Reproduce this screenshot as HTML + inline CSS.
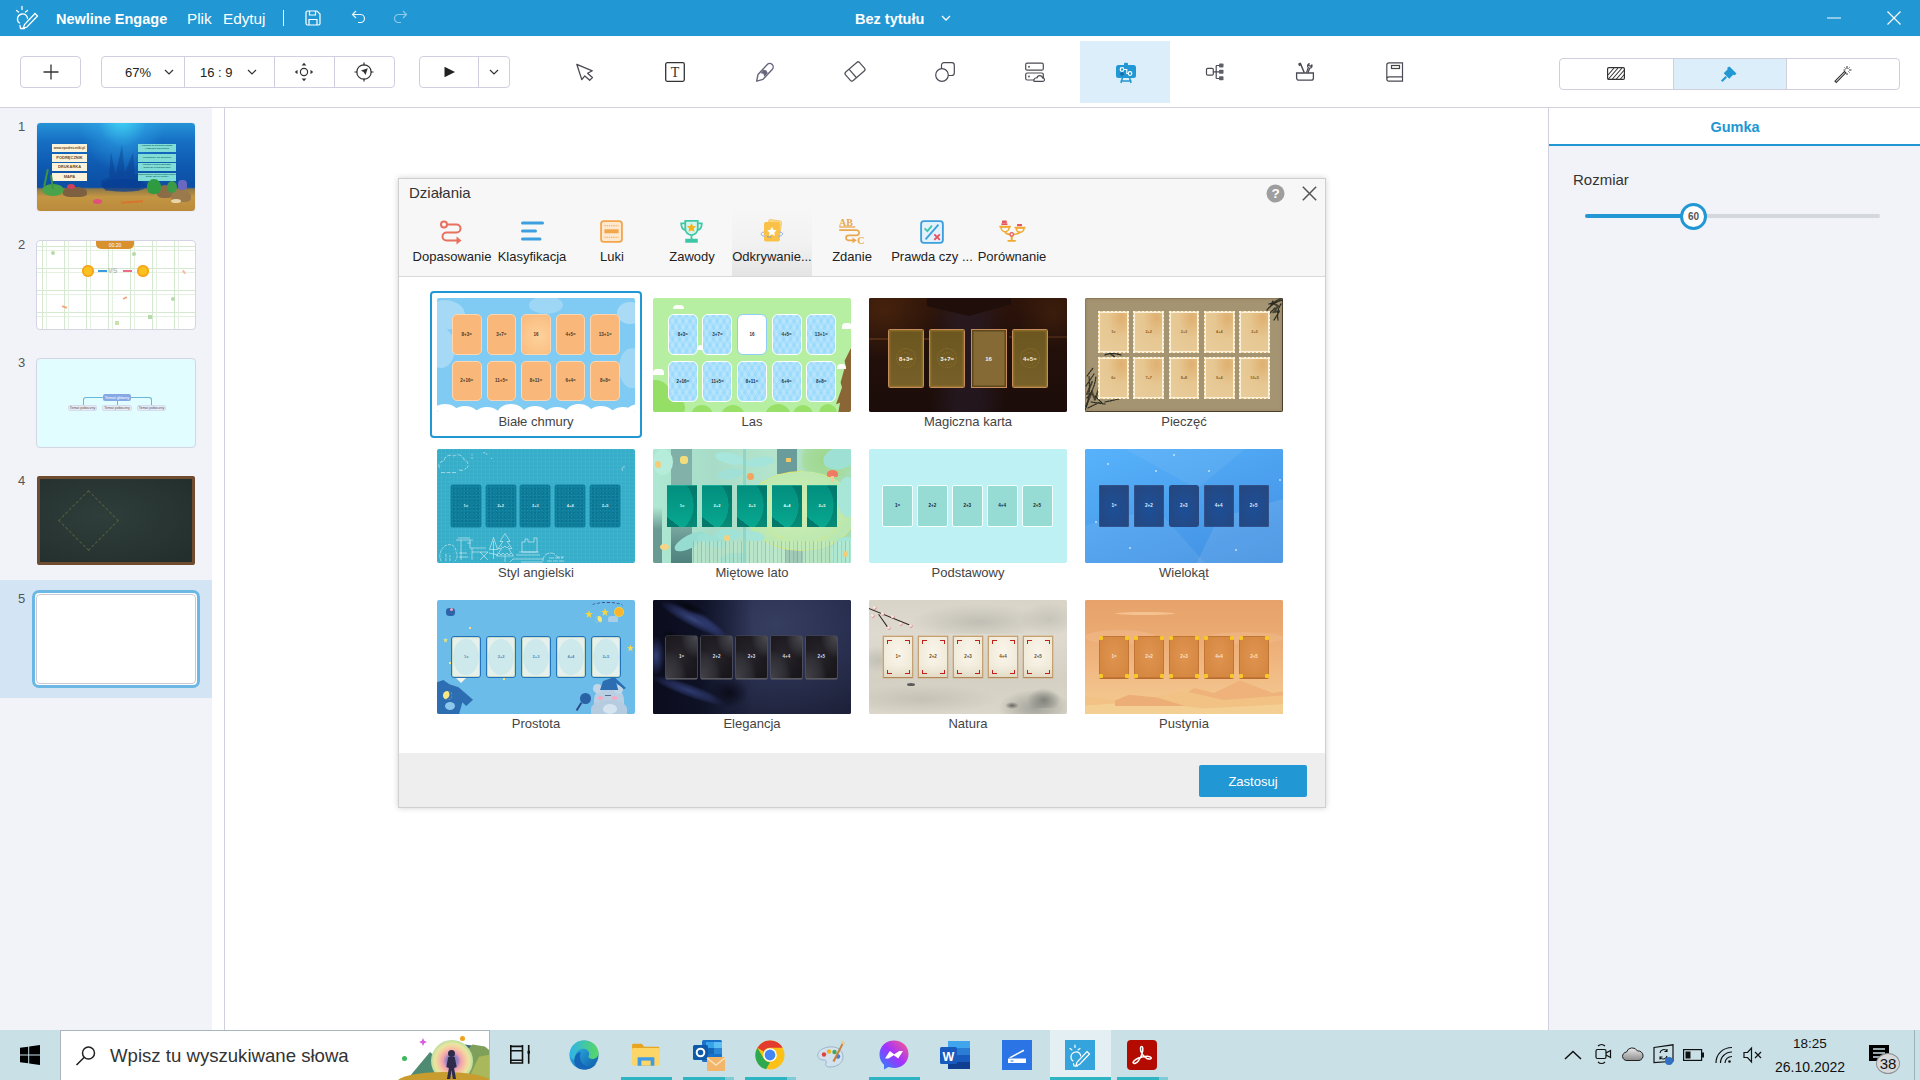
<!DOCTYPE html>
<html lang="pl">
<head>
<meta charset="utf-8">
<title>Newline Engage</title>
<style>
*{box-sizing:border-box;margin:0;padding:0}
html,body{width:1920px;height:1080px;overflow:hidden;background:#fff}
body{position:relative;font-family:"Liberation Sans",sans-serif;color:#333;-webkit-font-smoothing:antialiased}
.abs{position:absolute}
svg{position:absolute;overflow:visible}
/* title bar */
#tb{position:absolute;left:0;top:0;width:1920px;height:36px;background:#2197d4;color:#fff}
#tb span{position:absolute;white-space:nowrap;line-height:20px;top:9px;font-size:14.5px}
/* toolbar */
#tool{position:absolute;left:0;top:36px;width:1920px;height:72px;background:#fff;border-bottom:1px solid #d3d3e0}
.btn{position:absolute;border:1px solid #cfcfdf;border-radius:4px;background:#fff}
.vdiv{position:absolute;top:0;width:1px;height:100%;background:#cfcfdf}
.tx{position:absolute;white-space:nowrap;font-size:13px;line-height:16px;color:#222}
/* left */
#left{position:absolute;left:0;top:108px;width:212px;height:922px;background:#f2f3f9}
#vline{position:absolute;left:224px;top:108px;width:1px;height:922px;background:#d0d0df}
.num{position:absolute;left:18px;font-size:13px;color:#555;line-height:14px}
.bx{position:absolute;height:8px;font-size:3.200px;line-height:8px;text-align:center;white-space:nowrap;font-weight:bold;overflow:hidden}
.sl{position:absolute;left:36px;width:160px;height:90px;border-radius:4px;overflow:hidden;border:1px solid #d4d4e2}
/* right */
#right{position:absolute;left:1548px;top:108px;width:373px;height:922px;background:#f2f3f9;border-left:1px solid #d0d0df}
#rhead{position:absolute;left:0;top:0;width:372px;height:38px;background:#fff;border-bottom:2px solid #2197d4}
/* dialog */
#dlg{position:absolute;left:398px;top:178px;width:928px;height:630px;background:#fff;border:1px solid #cfcfcf;box-shadow:0 0 6px rgba(0,0,0,.18)}
#dhead{position:absolute;left:0;top:0;width:926px;height:98px;background:#f7f7f7;border-bottom:1px solid #d9d9d9}
#dfoot{position:absolute;left:0;top:574px;width:926px;height:54px;background:#eeeeee}
.tab{position:absolute;top:29px;width:80px;height:68px}
.tab svg{margin-top:1px}
.tab b{position:absolute;left:-10px;right:-10px;top:41px;text-align:center;font-weight:normal;font-size:13px;line-height:16px;color:#222;white-space:nowrap}
.th{position:absolute;width:198px;height:114px;overflow:hidden;border-radius:2px}
.lb{position:absolute;width:198px;text-align:center;font-size:13px;line-height:16px;color:#444;white-space:nowrap}
.c{position:absolute;border-radius:3px}
.c u{position:absolute;left:-4px;right:-4px;top:50%;margin-top:-2.500px;line-height:6px;text-align:center;text-decoration:none;white-space:nowrap;font-weight:bold}
/* taskbar */
#task{position:absolute;left:0;top:1030px;width:1920px;height:50px;background:#c9e0e6}
</style>
</head>
<body>
<!-- TITLEBAR -->
<div id="tb">
<span style="left:56px;font-weight:bold">Newline Engage</span>
<span style="left:187px;font-size:15.3px">Plik</span>
<span style="left:223px;font-size:15.3px">Edytuj</span>
<div class="abs" style="left:283px;top:10px;width:1px;height:16px;background:#fff"></div>
<span style="left:855px;font-weight:bold">Bez tytułu</span>

<svg style="left:15px;top:5px" width="26" height="26" viewBox="0 0 26 26" fill="none" stroke="#fff" stroke-width="1.300" stroke-linecap="round"><path d="M7 1.500v3M1.500 5.500l2 1.500M12.500 5.500l-2 1.500"/><path d="M4.500 18c-3-2-3-8 2.500-9 3.500-.3 5.500 2 5.500 4.500"/><path d="M5 20.500l.5 3h4"/><path d="M20 8.500l2.500 2.500L12 22l-3.800 1.200L9.500 19.500z"/></svg>
<svg style="left:305px;top:10px" width="16" height="16" viewBox="0 0 16 16" fill="none" stroke="#fff" stroke-width="1.200"><path d="M1 2.500A1.500 1.500 0 0 1 2.500 1H12l3 3v9.500a1.500 1.500 0 0 1-1.500 1.500h-11A1.500 1.500 0 0 1 1 13.500z"/><path d="M4.500 1v4h6V1M4 15V9.500h8V15"/></svg>
<svg style="left:351px;top:10px" width="15" height="14" viewBox="0 0 15 14" fill="none" stroke="#eaf4fb" stroke-width="1.200"><path d="M5 1L1.500 4.500 5 8M1.500 4.500h8a4 4 0 0 1 0 8H7"/></svg>
<svg style="left:393px;top:10px" width="15" height="14" viewBox="0 0 15 14" fill="none" stroke="#8fc8ea" stroke-width="1.200"><path d="M10 1l3.500 3.500L10 8M13.500 4.500h-8a4 4 0 0 0 0 8H8"/></svg>
<svg style="left:941px;top:15px" width="10" height="7" viewBox="0 0 10 7"><path d="M1 1l4 4 4-4" stroke="#fff" stroke-width="1.300" fill="none"/></svg>
<svg style="left:1827px;top:17px" width="14" height="2" viewBox="0 0 14 2"><path d="M0 1h14" stroke="#d5ebf7" stroke-width="1.200"/></svg>
<svg style="left:1887px;top:11px" width="14" height="14" viewBox="0 0 14 14"><path d="M.5 .5l13 13M13.500 .5l-13 13" stroke="#fff" stroke-width="1.200"/></svg>

</div>
<!-- TOOLBAR -->
<div id="tool">

<div class="btn" style="left:20px;top:20px;width:61px;height:32px"></div>
<svg style="left:43px;top:28px" width="16" height="16" viewBox="0 0 16 16"><path d="M8 .5v15M.5 8h15" stroke="#333" stroke-width="1.3" fill="none"/></svg>
<div class="btn" style="left:101px;top:20px;width:294px;height:32px">
 <div class="vdiv" style="left:82px"></div><div class="vdiv" style="left:172px"></div><div class="vdiv" style="left:232px"></div>
</div>
<span class="tx" style="left:125px;top:29px">67%</span>
<svg style="left:164px;top:33px" width="10" height="7" viewBox="0 0 10 7"><path d="M1 1l4 4 4-4" stroke="#333" stroke-width="1.2" fill="none"/></svg>
<span class="tx" style="left:200px;top:29px">16 : 9</span>
<svg style="left:247px;top:33px" width="10" height="7" viewBox="0 0 10 7"><path d="M1 1l4 4 4-4" stroke="#333" stroke-width="1.2" fill="none"/></svg>
<!-- move -->
<svg style="left:294px;top:26px" width="20" height="20" viewBox="0 0 20 20"><circle cx="10" cy="10" r="3.6" stroke="#333" stroke-width="1.2" fill="none"/><path d="M10 .8l2.3 2.7H7.7zM10 19.2l2.3-2.7H7.700zM.8 10l2.700-2.300v4.600zM19.200 10l-2.700-2.300v4.600z" fill="#333"/></svg>
<!-- compass -->
<svg style="left:354px;top:26px" width="20" height="20" viewBox="0 0 20 20"><circle cx="10" cy="10" r="7.2" stroke="#333" stroke-width="1.2" fill="none"/><path d="M10 .5v3M10 16.500v3M.5 10h3M16.500 10h3" stroke="#333" stroke-width="1.2"/><path d="M13.800 6.200l-2.300 6.800-1.700-2.800-2.800-1.700z" fill="#333"/></svg>
<div class="btn" style="left:419px;top:20px;width:91px;height:32px"><div class="vdiv" style="left:58px"></div></div>
<svg style="left:444px;top:30px" width="12" height="12" viewBox="0 0 12 12"><path d="M.5 .8L11 6 .5 11.200z" fill="#222"/></svg>
<svg style="left:489px;top:33px" width="10" height="7" viewBox="0 0 10 7"><path d="M1 1l4 4 4-4" stroke="#333" stroke-width="1.200" fill="none"/></svg>
<!-- cursor -->
<svg style="left:576px;top:27px" width="18" height="20" viewBox="0 0 18 20"><path d="M.8 1.300L16.300 7.800 11.600 10.300 16.400 14.600 13.700 17.300 8.800 12.900 5.800 16.600z" stroke="#4a4a55" stroke-width="1.300" fill="none" stroke-linejoin="round"/></svg>
<!-- text -->
<svg style="left:665px;top:26px" width="20" height="20" viewBox="0 0 20 20"><rect x=".7" y=".7" width="18.600" height="18.600" rx="1.500" stroke="#333" stroke-width="1.300" fill="none"/><text x="10" y="15" text-anchor="middle" font-family="Liberation Serif,serif" font-size="14" fill="#333">T</text></svg>
<!-- pen -->
<svg style="left:755px;top:26px" width="20" height="20" viewBox="0 0 20 20"><path d="M12.300 2.600a3.400 3.400 0 0 1 4.900 4.800L8 17.300 1.700 19.200 3 12.500z" stroke="#66667a" stroke-width="1.400" fill="none" stroke-linejoin="round"/><path d="M5.500 11.150L8.400 11.800 9.300 14.650 12.700 11.100 11.400 8.600 8.700 7.750z" fill="#66667a"/></svg>
<!-- eraser -->
<svg style="left:844px;top:25px" width="22" height="22" viewBox="0 0 22 22"><g transform="translate(11 10.500) rotate(-41)"><rect x="-9.300" y="-5.700" width="18.600" height="11.400" rx="2" stroke="#55555f" stroke-width="1.300" fill="none"/><path d="M-3 -5.700v11.400" stroke="#55555f" stroke-width="1.300"/></g></svg>
<!-- shapes -->
<svg style="left:935px;top:26px" width="20" height="20" viewBox="0 0 20 20"><rect x="6.500" y=".7" width="12.800" height="12.800" rx="2.500" stroke="#4a4a55" stroke-width="1.200" fill="none"/><circle cx="7" cy="13" r="6.300" stroke="#4a4a55" stroke-width="1.200" fill="#fff"/></svg>
<!-- resources -->
<svg style="left:1025px;top:26px" width="20" height="20" viewBox="0 0 20 20"><rect x=".7" y="1.200" width="17.600" height="7" rx="1.500" stroke="#4a4a55" stroke-width="1.200" fill="none"/><rect x=".7" y="11" width="17.600" height="7" rx="1.500" stroke="#4a4a55" stroke-width="1.200" fill="none"/><circle cx="4" cy="4.700" r="1" fill="#5f5f6c"/><circle cx="4" cy="14.500" r="1" fill="#5f5f6c"/><path d="M9 19.300h9c2 0 2-3.500-.5-3.500-.5-3-5-3-5.500 0-3-.5-3.500 3.500-3 3.500z" stroke="#4a4a55" stroke-width="1.200" fill="#fff"/></svg>
<!-- activities (active) -->
<div class="abs" style="left:1080px;top:5px;width:90px;height:62px;background:#dceef9"></div>
<svg style="left:1115px;top:26px" width="22" height="22" viewBox="0 0 22 22"><rect x="1" y="3" width="20" height="13" rx="2.500" fill="#2197d4"/><rect x="9" y=".8" width="4" height="3" rx="1" fill="#2197d4"/><path d="M6 21l1.500-5.500M16 21l-1.500-5.500M5.500 19h11" stroke="#2197d4" stroke-width="1.500" fill="none"/><circle cx="7" cy="7.500" r="1.800" stroke="#fff" stroke-width="1.200" fill="none"/><circle cx="15" cy="11.500" r="1.800" stroke="#fff" stroke-width="1.200" fill="none"/><path d="M8.800 7.500h3v4h1.500" stroke="#fff" stroke-width="1.100" fill="none"/><circle cx="7" cy="12" r="1.800" fill="#1769a3"/></svg>
<!-- tree -->
<svg style="left:1205px;top:27px" width="20" height="18" viewBox="0 0 20 18"><rect x="1.500" y="5.300" width="6.800" height="6.800" rx="1.200" stroke="#4a4a55" stroke-width="1.200" fill="none"/><path d="M8.300 8.800h3M11.200 2.500v13M11.200 2.500h3M11.200 8.800h3M11.200 15.500h3" stroke="#4a4a55" stroke-width="1.200" fill="none"/><rect x="14" y=".5" width="4.500" height="4" rx=".8" fill="#5f5f6c"/><rect x="14" y="6.800" width="4.500" height="4" rx=".8" fill="#5f5f6c"/><rect x="14" y="13.300" width="4.500" height="4" rx=".8" fill="#5f5f6c"/></svg>
<!-- toolbox -->
<svg style="left:1295px;top:26px" width="20" height="20" viewBox="0 0 20 20"><path d="M1.600 11h16.800v5a2.200 2.200 0 0 1-2.200 2.200H3.800A2.200 2.200 0 0 1 1.600 16z" stroke="#4a4a55" stroke-width="1.300" fill="none"/><path d="M3.500 2.200l1.800-.9 4 9.500" stroke="#4a4a55" stroke-width="1.500" fill="none" stroke-linejoin="round"/><path d="M3.200 2.500l2.200-1.300 1 1.800-2.200 1.300z" fill="#4a4a55"/><path d="M11.500 10.800l1.800-5.300c-1.300-1.300-.8-3.300.8-4l-.3 2 1.700.8 1.300-1.500c.8 1.500-.3 3.400-2.200 3.400l-1.500 4.600" stroke="#4a4a55" stroke-width="1.200" fill="none" stroke-linejoin="round"/></svg>
<!-- book -->
<svg style="left:1386px;top:26px" width="18" height="20" viewBox="0 0 18 20"><path d="M3 .8h13.500v18.400H3a2.200 2.200 0 0 1 0-4.400h13.500M.8 17V3A2.200 2.200 0 0 1 3 .8" stroke="#4a4a55" stroke-width="1.200" fill="none"/><rect x="5.500" y="3.500" width="8" height="3" stroke="#444" stroke-width="1.200" fill="none"/></svg>
<!-- right group -->
<div class="btn" style="left:1559px;top:22px;width:341px;height:32px;overflow:hidden"><div class="abs" style="left:113px;top:0;width:114px;height:100%;background:#dceef9"></div><div class="vdiv" style="left:113px"></div><div class="vdiv" style="left:226px"></div></div>
<svg style="left:1607px;top:31px" width="18" height="13" viewBox="0 0 18 13"><rect x=".6" y=".6" width="16.800" height="11.800" rx="1.200" stroke="#333" stroke-width="1.200" fill="none"/><path d="M1 8L7 1M1 12.500L11 1M5 12.500L15 1M9 12.500L17.300 3M13 12.500l4.300-5" stroke="#333" stroke-width="1.100"/></svg>
<svg style="left:1720px;top:29px" width="18" height="18" viewBox="0 0 18 18"><path d="M9.500 1.500l7 7-1.800 1.800-1.500-.5-4 4-5.500-5.500 4-4-.5-1.500z" fill="#2197d4"/><path d="M5.500 11L1 15.500 2.500 17 7 12.500z" fill="#2197d4"/></svg>
<svg style="left:1834px;top:29px" width="18" height="18" viewBox="0 0 18 18"><path d="M1 16.200L10.500 6.500l1.300 1.300L2.300 17.500z" stroke="#333" stroke-width="1.100" fill="none"/><path d="M13 1v3M13 8v2M9.500 5h2M15 5h2.500M10.500 2.500l1 1M15.500 2.500l-1 1M15.500 7.500l-1-1" stroke="#333" stroke-width="1"/></svg>

</div>
<!-- LEFT -->
<div id="left">

<span class="num" style="top:12px">1</span>
<div class="sl" style="top:14px;border:1.500px solid #ececf5;background:linear-gradient(180deg,#2693d8 0,#1670c4 20%,#0e58b0 50%,#0c4ea4 73%,#8f7a48 75%,#c39643 84%,#b98a3b 100%)">
 <div class="abs" style="left:40px;top:-14px;width:90px;height:64px;background:radial-gradient(ellipse at 50% 8%,rgba(70,225,250,.9),rgba(50,170,235,.4) 40%,rgba(40,140,220,0) 70%)"></div>
 <div class="abs" style="left:62px;top:20px;width:46px;height:48px;background:rgba(8,52,130,.38);clip-path:polygon(14% 100%,4% 78%,22% 72%,26% 18%,36% 66%,50% 4%,56% 62%,74% 20%,78% 66%,98% 62%,88% 100%)"></div>
 <div class="abs" style="left:64px;top:56px;width:46px;height:13px;border-radius:50%;background:rgba(8,60,150,.55)"></div>
 <div class="bx" style="left:15px;top:21px;width:35px;background:#fbf3d9;color:#6a4a2a">www.epodreczniki.pl</div><div class="bx" style="left:15px;top:30.500px;width:35px;background:#fbf3d9;color:#6a4a2a;font-size:4px">PODRĘCZNIK</div><div class="bx" style="left:15px;top:40px;width:35px;background:#fbf3d9;color:#6a4a2a;font-size:4px">DRUKARKA</div><div class="bx" style="left:15px;top:49.500px;width:35px;background:#fbf3d9;color:#6a4a2a;font-size:4px">MAPA</div>
 <div class="bx" style="left:101px;top:21px;width:38px;background:#7fdcd6;color:#1f6a66;font-size:2.500px;line-height:2.600px;padding-top:1.400px">Książka ze zbiorem zadań<br>i ćwiczeń dla ucznia</div><div class="bx" style="left:101px;top:30.500px;width:38px;background:#7fdcd6;color:#1f6a66;font-size:2.500px">Urządzenie do wydruku</div><div class="bx" style="left:101px;top:40px;width:38px;background:#7fdcd6;color:#1f6a66;font-size:2.500px;line-height:2.600px;padding-top:1.400px">Strona z podręcznikami<br>w wersji elektronicznej</div><div class="bx" style="left:101px;top:49.500px;width:38px;background:#7fdcd6;color:#1f6a66;font-size:2.500px;line-height:2.600px;padding-top:1.400px">Zmniejszony obraz powierzchni<br>Ziemi lub jej części</div>
 <div class="abs" style="left:5px;top:61px;width:22px;height:12px;border-radius:50%;background:#4aa24a"></div>
 <div class="abs" style="left:8px;top:46px;width:2px;height:18px;background:#3c9440;transform:rotate(12deg)"></div><div class="abs" style="left:14px;top:52px;width:2px;height:14px;background:#3c9440;transform:rotate(-8deg)"></div>
 <div class="abs" style="left:26px;top:64px;width:24px;height:10px;border-radius:50% 50% 30% 30%;background:#7d6040"></div>
 <div class="abs" style="left:30px;top:61px;width:8px;height:5px;border-radius:50%;background:#d0405a"></div>
 <div class="abs" style="left:120px;top:62px;width:16px;height:13px;border-radius:50% 50% 30% 30%;background:#8a6c46"></div>
 <div class="abs" style="left:134px;top:67px;width:20px;height:12px;border-radius:50% 50% 30% 30%;background:#9a7a4c"></div>
 <div class="abs" style="left:110px;top:56px;width:14px;height:15px;border-radius:50% 50% 40% 40%;background:#2f9a40"></div>
 <div class="abs" style="left:130px;top:58px;width:10px;height:12px;border-radius:50%;background:#3a9a48"></div>
 <div class="abs" style="left:141px;top:57px;width:9px;height:10px;border-radius:40%;background:#6a68c0"></div>
 <div class="abs" style="left:56px;top:76px;width:9px;height:5px;border-radius:50%;background:#e0507a"></div>
 <div class="abs" style="left:84px;top:78px;width:22px;height:2px;background:#d8742c;transform:rotate(-4deg)"></div>
 <div class="abs" style="left:134px;top:76px;width:10px;height:4px;border-radius:50%;background:#e8d6a8"></div>
</div>
<span class="num" style="top:130px">2</span>
<div class="sl" style="top:132px;background:#fff;background-image:linear-gradient(90deg,transparent 0,transparent 5px,#d3e8cf 5px,#d3e8cf 6px,transparent 6px,transparent 9px,#e4f0e0 9px,#e4f0e0 10px,transparent 10px),linear-gradient(180deg,transparent 0,transparent 5px,#d3e8cf 5px,#d3e8cf 6px,transparent 6px,transparent 9px,#e4f0e0 9px,#e4f0e0 10px,transparent 10px);background-size:22px 22px,22px 22px">
 <div class="abs" style="left:59px;top:0;width:38px;height:8px;border-radius:0 0 5px 5px;background:#d9912e;color:#fff;font-size:5px;line-height:8px;text-align:center">00:20</div>
 <div class="abs" style="left:45px;top:24px;width:12px;height:12px;border-radius:50%;background:#fbc21e;box-shadow:inset 0 0 0 2px #f5a623"></div>
 <div class="abs" style="left:100px;top:24px;width:12px;height:12px;border-radius:50%;background:#fbc21e;box-shadow:inset 0 0 0 2px #f5a623"></div>
 <div class="abs" style="left:61px;top:29px;width:9px;height:2px;background:#3a9ce0"></div><div class="abs" style="left:71px;top:26px;width:14px;height:7px;color:#bbb;font-size:7px;line-height:7px;font-weight:bold">VS</div><div class="abs" style="left:86px;top:29px;width:9px;height:2px;background:#f06a8a"></div>
 <div class="abs" style="left:14px;top:10px;width:4px;height:4px;border-radius:50%;background:#b7dba8"></div><div class="abs" style="left:95px;top:11px;width:4px;height:4px;border-radius:50%;background:#b7dba8"></div><div class="abs" style="left:134px;top:56px;width:4px;height:4px;border-radius:50%;background:#b7dba8"></div><div class="abs" style="left:111px;top:74px;width:4px;height:4px;background:#b7dba8"></div><div class="abs" style="left:78px;top:80px;width:4px;height:4px;background:#c9e4a8"></div>
 <div class="abs" style="left:86px;top:56px;width:4px;height:2px;background:#f5a27a;transform:rotate(-30deg)"></div><div class="abs" style="left:25px;top:65px;width:5px;height:2px;background:#f5a27a;transform:rotate(20deg)"></div><div class="abs" style="left:145px;top:30px;width:4px;height:2px;background:#f7b8a0;transform:rotate(50deg)"></div>
</div>
<span class="num" style="top:248px">3</span>
<div class="sl" style="top:250px;background:#e1fdff">
 <div class="abs" style="left:46px;top:38px;width:69px;height:8px;border:1px solid #6ab6d6;border-bottom:0;border-radius:3px 3px 0 0"></div>
 <div class="abs" style="left:66px;top:35px;width:28px;height:7px;border-radius:2px;background:#86a9e6;color:#fff;font-size:4px;line-height:7px;text-align:center">Temat główny</div>
 <div class="abs" style="left:80px;top:42px;width:1px;height:5px;background:#6ab6d6"></div>
 <div class="abs" style="left:31px;top:46px;width:29px;height:6px;border-radius:2px;background:#e7ebf7;border:1px solid #d5dcee;color:#555;font-size:3.500px;line-height:4px;text-align:center">Temat poboczny</div>
 <div class="abs" style="left:65px;top:46px;width:30px;height:6px;border-radius:2px;background:#e7ebf7;border:1px solid #d5dcee;color:#555;font-size:3.500px;line-height:4px;text-align:center">Temat poboczny</div>
 <div class="abs" style="left:100px;top:46px;width:29px;height:6px;border-radius:2px;background:#e7ebf7;border:1px solid #d5dcee;color:#555;font-size:3.500px;line-height:4px;text-align:center">Temat poboczny</div>
</div>
<span class="num" style="top:366px">4</span>
<div class="sl" style="left:37px;width:158px;height:89px;top:368px;border:0;border-radius:2px;background:#6f4c2f">
 <div class="abs" style="left:3px;top:3px;width:152px;height:83px;background:radial-gradient(ellipse at 40% 45%,#2f3e3b,#232f2d 90%)"></div>
 <div class="abs" style="left:30px;top:23px;width:43px;height:43px;border:1px dashed #565c40;transform:rotate(45deg)"></div>
</div>
<div class="abs" style="left:0;top:472px;width:212px;height:118px;background:#d3e5f4"></div>
<span class="num" style="top:484px">5</span>
<div class="abs" style="left:32px;top:482px;width:168px;height:98px;border:3px solid #6ab8e3;border-radius:7px;background:#fff"></div>
<div class="sl" style="left:36px;top:486px;width:160px;height:90px;background:#fff;border-color:#c9c9d4"></div>

</div>
<div id="vline"></div>
<!-- RIGHT -->
<div id="right">
<div id="rhead"></div>

<div class="abs" style="left:0;top:9px;width:372px;text-align:center;font-weight:bold;font-size:14.500px;line-height:20px;color:#2197d4">Gumka</div>
<div class="abs" style="left:24px;top:62px;font-size:15px;line-height:20px;color:#333">Rozmiar</div>
<div class="abs" style="left:36px;top:106px;width:295px;height:4px;border-radius:2px;background:#d4d8dd"></div>
<div class="abs" style="left:36px;top:106px;width:108px;height:4px;border-radius:2px;background:#2197d4"></div>
<div class="abs" style="left:131px;top:95px;width:27px;height:27px;border-radius:50%;border:3px solid #2197d4;background:#fff;font-size:10px;font-weight:bold;line-height:21px;text-align:center;color:#555">60</div>

</div>
<!-- DIALOG -->
<div id="dlg">
<div id="dhead">
<div class="abs" style="left:10px;top:4px;font-size:15px;line-height:20px;color:#333">Działania</div>
<svg style="left:867px;top:5px" width="19" height="19" viewBox="0 0 19 19"><circle cx="9.500" cy="9.500" r="9" fill="#9e9e9e"/><text x="9.500" y="14.300" text-anchor="middle" font-family="Liberation Sans,sans-serif" font-weight="bold" font-size="13.500" fill="#fff">?</text></svg>
<svg style="left:903px;top:7px" width="15" height="15" viewBox="0 0 15 15"><path d="M.8 .8l13.400 13.400M14.200 .8L.8 14.200" stroke="#555" stroke-width="1.500"/></svg>
<div class="tab" style="left:13px"><svg style="left:27px;top:11px" width="26" height="24" viewBox="0 0 26 24" fill="none" stroke="#e8705f" stroke-width="2"><circle cx="5" cy="4.500" r="3"/><path d="M8 4.500h9.500a4 4 0 0 1 0 8H7.500a4 4 0 0 0 0 8h11"/><path d="M17.500 16.500l5 4-5 4z" fill="#e8705f" stroke="none"/></svg><b>Dopasowanie</b></div>
<div class="tab" style="left:93px"><svg style="left:29px;top:12px" width="24" height="22" viewBox="0 0 24 22" stroke="#3d9fe0" stroke-width="3" stroke-linecap="round"><path d="M1.500 2h20M1.500 10h13M1.500 18h17.500"/></svg><b>Klasyfikacja</b></div>
<div class="tab" style="left:173px"><svg style="left:28px;top:11px" width="23" height="23" viewBox="0 0 26 26"><rect x="1.200" y="1.200" width="23.600" height="23.600" rx="3" fill="#fde9cf" stroke="#f3a54a" stroke-width="2"/><path d="M5 6.500h16M5 19.500h16" stroke="#f3a54a" stroke-width="1.200" stroke-dasharray="1.500 1"/><rect x="5" y="10.500" width="16" height="4.500" fill="#f3a54a"/></svg><b>Luki</b></div>
<div class="tab" style="left:253px"><svg style="left:27px;top:10px" width="25" height="25" viewBox="0 0 28 28"><path d="M7 2h14v9a7 7 0 0 1-14 0z" fill="#d4f5ec" stroke="#3dc7a6" stroke-width="2"/><path d="M7 5H2.500c0 5 2 7 5 7.500M21 5h4.500c0 5-2 7-5 7.500" fill="none" stroke="#3dc7a6" stroke-width="2"/><path d="M14 18v5M8 25.500h12v-2.500H8z" stroke="#3dc7a6" stroke-width="2" fill="#3dc7a6"/><path d="M14 4.500l1.600 3.200 3.500.5-2.500 2.500.6 3.500-3.200-1.700-3.200 1.700.6-3.500-2.500-2.500 3.500-.5z" fill="#f6b21b"/></svg><b>Zawody</b></div>
<div class="tab" style="left:333px;background:linear-gradient(180deg,#f7f7f7 0,#f1f1f1 55%,#e4e4e4 100%)"><svg style="left:27px;top:10px" width="26" height="24" viewBox="0 0 26 24"><rect x="8.500" y="1.200" width="13" height="17" rx="1.500" fill="#fbd88a" stroke="#f6c35a" stroke-width=".8" transform="rotate(9 15 10)"/><rect x="5" y="3" width="15.800" height="19.500" rx="1.800" fill="#f9c147"/><path d="M12.900 7.800l1.500 3 3.300.5-2.400 2.300.6 3.300-3-1.600-3 1.600.6-3.300-2.400-2.300 3.300-.5z" fill="#fff"/><path d="M5 13c-4 .8-4.200 3.500 1 4.300M20.800 13c4.300.8 4 3.600-1.500 4.400" fill="none" stroke="#8ab0ee" stroke-width="1"/><path d="M8 17.600c2 .5 3.500.5 4.500.3" fill="none" stroke="#6a98e8" stroke-width="1"/></svg><b>Odkrywanie...</b></div>
<div class="tab" style="left:413px"><svg style="left:26px;top:9px" width="28" height="28" viewBox="0 0 28 28"><text x="1" y="7.800" font-family="Liberation Serif,serif" font-weight="bold" font-size="10" fill="#e9a84e">AB</text><path d="M1.200 9h16" stroke="#e9a84e" stroke-width="1.300" fill="none"/><path d="M1.200 12.200h17.300a2.600 2.600 0 0 1 0 5.200h-8a2.450 2.450 0 0 0 0 4.900h4.500" fill="none" stroke="#e9a84e" stroke-width="1.700"/><path d="M14.500 19.400l4.300 2.900-4.300 2.900z" fill="#e9a84e"/><text x="19.300" y="26" font-family="Liberation Serif,serif" font-weight="bold" font-size="10" fill="#e9a84e">C</text></svg><b>Zdanie</b></div>
<div class="tab" style="left:493px"><svg style="left:28px;top:11px" width="24" height="24" viewBox="0 0 26 26"><rect x="1.200" y="1.200" width="23.600" height="23.600" rx="3" fill="#e3f1fc" stroke="#3d9fe0" stroke-width="2"/><path d="M20 5L6 21" stroke="#3d9fe0" stroke-width="2"/><path d="M5 9l3 3 5-6" fill="none" stroke="#3dc7a6" stroke-width="2"/><path d="M15.500 15.500l6 6M21.500 15.500l-6 6" stroke="#e8505f" stroke-width="2"/></svg><b>Prawda czy ...</b></div>
<div class="tab" style="left:573px"><svg style="left:26px;top:10px" width="28" height="24" viewBox="0 0 28 24"><rect x="4" y="1.600" width="4.800" height="2.300" rx=".5" fill="#e8555f"/><rect x="3.300" y="4.300" width="6.200" height="1.800" rx=".5" fill="#e8555f"/><rect x="19" y="5" width="5" height="2.300" rx=".5" fill="#e8555f"/><path d="M2 7.600h10.200M17.200 8.500h9.600" stroke="#f1a92f" stroke-width="1.700" stroke-linecap="round"/><path d="M3 8a4.100 4.700 0 0 0 8.200 0zM18.200 9a3.900 4.300 0 0 0 7.800 0z" fill="none" stroke="#f1a92f" stroke-width="1.600"/><path d="M7.100 12.800c.5 2 3.500 2.700 6.600 2.700s5.800-.5 8.400-2.300" fill="none" stroke="#f1a92f" stroke-width="1.700"/><path d="M13.700 17v4" stroke="#f1a92f" stroke-width="2"/><path d="M10.300 21.800h6.800" stroke="#f1a92f" stroke-width="1.800" stroke-linecap="round"/><circle cx="13.700" cy="15.400" r="1.700" fill="#fff" stroke="#e8555f" stroke-width="1.300"/></svg><b>Porównanie</b></div>

</div>
<!--THUMBS-START-->
<div class="abs" style="left:31px;top:112px;width:212px;height:147px;border:2px solid #2197d4;border-radius:4px"></div>
<div class="th" style="left:38px;top:119px;background:#7fcbf4"><div class="abs" style="left:-12px;top:2px;width:40px;height:30px;border-radius:50%;background:#a5d9f6"></div><div class="abs" style="left:-10px;top:30px;width:28px;height:40px;border-radius:50%;background:#a5d9f6"></div><div class="abs" style="left:92px;top:-2px;width:34px;height:18px;border-radius:50%;background:#9ed6f5"></div><div class="abs" style="left:180px;top:4px;width:26px;height:22px;border-radius:50%;background:#a9dbf6"></div><div class="abs" style="left:182px;top:50px;width:26px;height:40px;border-radius:50%;background:#9ed6f5"></div><div class="abs" style="left:-6px;top:106px;width:28px;height:20px;border-radius:50%;background:#fff"></div><div class="abs" style="left:14px;top:107.5px;width:28px;height:20px;border-radius:50%;background:#fff"></div><div class="abs" style="left:36px;top:109px;width:28px;height:20px;border-radius:50%;background:#fff"></div><div class="abs" style="left:60px;top:106px;width:28px;height:20px;border-radius:50%;background:#fff"></div><div class="abs" style="left:84px;top:107.5px;width:28px;height:20px;border-radius:50%;background:#fff"></div><div class="abs" style="left:106px;top:109px;width:28px;height:20px;border-radius:50%;background:#fff"></div><div class="abs" style="left:128px;top:106px;width:28px;height:20px;border-radius:50%;background:#fff"></div><div class="abs" style="left:150px;top:107.5px;width:28px;height:20px;border-radius:50%;background:#fff"></div><div class="abs" style="left:172px;top:109px;width:28px;height:20px;border-radius:50%;background:#fff"></div><div class="abs" style="left:188px;top:106px;width:28px;height:20px;border-radius:50%;background:#fff"></div><div class="c" style="left:15px;top:16px;width:29.5px;height:41px;background:#f9b87a;border:1px solid #fcd6b0;border-radius:5px"><u style="color:#4a3424;font-size:4.5px">8+3=</u></div><div class="c" style="left:49.6px;top:16px;width:29.5px;height:41px;background:#f9b87a;border:1px solid #fcd6b0;border-radius:5px"><u style="color:#4a3424;font-size:4.5px">3+7=</u></div><div class="c" style="left:84.2px;top:16px;width:29.5px;height:41px;background:radial-gradient(circle at 60% 55%,#fdd29c,#f9b87a);border:1px solid #fcd6b0;border-radius:5px"><u style="color:#4a3424;font-size:4.5px">16</u></div><div class="c" style="left:118.8px;top:16px;width:29.5px;height:41px;background:#f9b87a;border:1px solid #fcd6b0;border-radius:5px"><u style="color:#4a3424;font-size:4.5px">4+5=</u></div><div class="c" style="left:153.4px;top:16px;width:29.5px;height:41px;background:#f9b87a;border:1px solid #fcd6b0;border-radius:5px"><u style="color:#4a3424;font-size:4.5px">13+1=</u></div><div class="c" style="left:15px;top:62.5px;width:29.5px;height:40.6px;background:#f9b87a;border:1px solid #fcd6b0;border-radius:5px"><u style="color:#4a3424;font-size:4.5px">2+16=</u></div><div class="c" style="left:49.6px;top:62.5px;width:29.5px;height:40.6px;background:#f9b87a;border:1px solid #fcd6b0;border-radius:5px"><u style="color:#4a3424;font-size:4.5px">11+5=</u></div><div class="c" style="left:84.2px;top:62.5px;width:29.5px;height:40.6px;background:#f9b87a;border:1px solid #fcd6b0;border-radius:5px"><u style="color:#4a3424;font-size:4.5px">8+11=</u></div><div class="c" style="left:118.8px;top:62.5px;width:29.5px;height:40.6px;background:#f9b87a;border:1px solid #fcd6b0;border-radius:5px"><u style="color:#4a3424;font-size:4.5px">6+4=</u></div><div class="c" style="left:153.4px;top:62.5px;width:29.5px;height:40.6px;background:#f9b87a;border:1px solid #fcd6b0;border-radius:5px"><u style="color:#4a3424;font-size:4.5px">8+8=</u></div></div>
<div class="lb" style="left:38px;top:235px">Białe chmury</div>
<div class="th" style="left:254px;top:119px;background:#b6efa2"><div class="abs" style="left:-14px;top:82px;width:34px;height:44px;border-radius:50%;background:#96df66"></div><div class="abs" style="left:8px;top:98px;width:24px;height:24px;border-radius:50%;background:#96df66"></div><div class="abs" style="left:38px;top:107px;width:22px;height:22px;border-radius:50%;background:#98e068"></div><div class="abs" style="left:68px;top:107px;width:24px;height:24px;border-radius:50%;background:#98e068"></div><div class="abs" style="left:112px;top:106px;width:26px;height:26px;border-radius:50%;background:#98e068"></div><div class="abs" style="left:140px;top:107px;width:20px;height:20px;border-radius:50%;background:#98e068"></div><div class="abs" style="left:166px;top:106px;width:18px;height:18px;border-radius:50%;background:#98e068"></div><div class="abs" style="left:180px;top:46px;width:20px;height:70px;background:#8a6535;clip-path:polygon(100% 0,100% 100%,25% 100%,35% 84%,15% 86%,45% 62%,38% 55%,62% 30%,58% 24%)"></div><div class="abs" style="left:20px;top:7px;width:11px;height:4px;border-radius:4px 4px 0 0;background:#fff"></div><div class="abs" style="left:0;top:71px;width:11px;height:6px;border-radius:4px 4px 0 0;background:#fff"></div><div class="abs" style="left:189px;top:25px;width:10px;height:6px;border-radius:4px 4px 0 0;background:#fff"></div><div class="abs" style="left:184px;top:66px;width:9px;height:5px;border-radius:4px 4px 0 0;background:#fff"></div><div class="abs" style="left:45px;top:47px;width:5px;height:5px;border-radius:3px 3px 0 0;background:#fff"></div><div class="c" style="left:14.7px;top:15.5px;width:30.2px;height:41.5px;background-color:#9adafc;border:1.500px solid #fff;border-radius:6px;background-image:repeating-linear-gradient(60deg,rgba(255,255,255,.16) 0 3px,transparent 3px 6px),repeating-linear-gradient(-60deg,rgba(255,255,255,.16) 0 3px,transparent 3px 6px)"><u style="color:#234;font-size:4.5px">8+3=</u></div><div class="c" style="left:49.3px;top:15.5px;width:30.2px;height:41.5px;background-color:#9adafc;border:1.500px solid #fff;border-radius:6px;background-image:repeating-linear-gradient(60deg,rgba(255,255,255,.16) 0 3px,transparent 3px 6px),repeating-linear-gradient(-60deg,rgba(255,255,255,.16) 0 3px,transparent 3px 6px)"><u style="color:#234;font-size:4.5px">3+7=</u></div><div class="c" style="left:83.9px;top:15.5px;width:30.2px;height:41.5px;background:#fff;border:1.500px solid #8fcdf6;border-radius:6px"><u style="color:#234;font-size:4.5px">16</u></div><div class="c" style="left:118.5px;top:15.5px;width:30.2px;height:41.5px;background-color:#9adafc;border:1.500px solid #fff;border-radius:6px;background-image:repeating-linear-gradient(60deg,rgba(255,255,255,.16) 0 3px,transparent 3px 6px),repeating-linear-gradient(-60deg,rgba(255,255,255,.16) 0 3px,transparent 3px 6px)"><u style="color:#234;font-size:4.5px">4+5=</u></div><div class="c" style="left:153.1px;top:15.5px;width:30.2px;height:41.5px;background-color:#9adafc;border:1.500px solid #fff;border-radius:6px;background-image:repeating-linear-gradient(60deg,rgba(255,255,255,.16) 0 3px,transparent 3px 6px),repeating-linear-gradient(-60deg,rgba(255,255,255,.16) 0 3px,transparent 3px 6px)"><u style="color:#234;font-size:4.5px">13+1=</u></div><div class="c" style="left:14.7px;top:62.5px;width:30.2px;height:41px;background-color:#9adafc;border:1.500px solid #fff;border-radius:6px;background-image:repeating-linear-gradient(60deg,rgba(255,255,255,.16) 0 3px,transparent 3px 6px),repeating-linear-gradient(-60deg,rgba(255,255,255,.16) 0 3px,transparent 3px 6px)"><u style="color:#234;font-size:4.5px">2+16=</u></div><div class="c" style="left:49.3px;top:62.5px;width:30.2px;height:41px;background-color:#9adafc;border:1.500px solid #fff;border-radius:6px;background-image:repeating-linear-gradient(60deg,rgba(255,255,255,.16) 0 3px,transparent 3px 6px),repeating-linear-gradient(-60deg,rgba(255,255,255,.16) 0 3px,transparent 3px 6px)"><u style="color:#234;font-size:4.5px">11+5=</u></div><div class="c" style="left:83.9px;top:62.5px;width:30.2px;height:41px;background-color:#9adafc;border:1.500px solid #fff;border-radius:6px;background-image:repeating-linear-gradient(60deg,rgba(255,255,255,.16) 0 3px,transparent 3px 6px),repeating-linear-gradient(-60deg,rgba(255,255,255,.16) 0 3px,transparent 3px 6px)"><u style="color:#234;font-size:4.5px">8+11=</u></div><div class="c" style="left:118.5px;top:62.5px;width:30.2px;height:41px;background-color:#9adafc;border:1.500px solid #fff;border-radius:6px;background-image:repeating-linear-gradient(60deg,rgba(255,255,255,.16) 0 3px,transparent 3px 6px),repeating-linear-gradient(-60deg,rgba(255,255,255,.16) 0 3px,transparent 3px 6px)"><u style="color:#234;font-size:4.5px">6+4=</u></div><div class="c" style="left:153.1px;top:62.5px;width:30.2px;height:41px;background-color:#9adafc;border:1.500px solid #fff;border-radius:6px;background-image:repeating-linear-gradient(60deg,rgba(255,255,255,.16) 0 3px,transparent 3px 6px),repeating-linear-gradient(-60deg,rgba(255,255,255,.16) 0 3px,transparent 3px 6px)"><u style="color:#234;font-size:4.5px">8+8=</u></div></div>
<div class="lb" style="left:254px;top:235px">Las</div>
<div class="th" style="left:470px;top:119px;background:#23100a"><div class="abs" style="left:0;top:0;width:198px;height:114px;background:linear-gradient(180deg,#2e1409 0,#23100a 35%,#1c0d0a 100%)"></div><div class="abs" style="left:0;top:0;width:70px;height:60px;background:radial-gradient(ellipse at 20% 20%,rgba(80,40,14,.7),rgba(60,28,10,0) 75%)"></div><div class="abs" style="left:150px;top:0;width:48px;height:50px;background:radial-gradient(ellipse at 70% 30%,rgba(70,36,14,.6),rgba(60,28,10,0) 75%)"></div><div class="abs" style="left:62px;top:0;width:74px;height:114px;background:linear-gradient(90deg,rgba(40,28,48,0),rgba(42,32,50,.5) 35%,rgba(40,30,48,.5) 65%,rgba(40,28,48,0))"></div><div class="abs" style="left:0;top:40px;width:62px;height:1.500px;background:rgba(110,62,30,.55)"></div><div class="abs" style="left:140px;top:38px;width:58px;height:1.500px;background:rgba(100,56,28,.45)"></div><div class="abs" style="left:58px;top:0;width:84px;height:18px;background:#1f0e0a;clip-path:polygon(0 0,100% 0,100% 35%,50% 100%,0 45%)"></div><div class="c" style="left:18.9px;top:30.800px;width:36px;height:59.200px;background:linear-gradient(180deg,#6b5620,#77602a);border:1px solid #c48c5c;border-radius:1.500px;box-shadow:inset 0 0 0 1.500px rgba(190,140,40,.35)"><i style="position:absolute;left:50%;top:50%;width:20px;height:20px;margin:-10px 0 0 -10px;border-radius:50%;border:1.500px dotted rgba(175,135,50,.55)"></i><i style="position:absolute;left:50%;top:50%;width:13px;height:13px;margin:-6.500px 0 0 -6.500px;border-radius:50%;border:1px dotted rgba(175,135,50,.45)"></i><u style="color:#f6f0e0;font-size:6px">8+3=</u></div><div class="c" style="left:60.2px;top:30.800px;width:36px;height:59.200px;background:linear-gradient(180deg,#6b5620,#77602a);border:1px solid #c48c5c;border-radius:1.500px;box-shadow:inset 0 0 0 1.500px rgba(190,140,40,.35)"><i style="position:absolute;left:50%;top:50%;width:20px;height:20px;margin:-10px 0 0 -10px;border-radius:50%;border:1.500px dotted rgba(175,135,50,.55)"></i><i style="position:absolute;left:50%;top:50%;width:13px;height:13px;margin:-6.500px 0 0 -6.500px;border-radius:50%;border:1px dotted rgba(175,135,50,.45)"></i><u style="color:#f6f0e0;font-size:6px">3+7=</u></div><div class="c" style="left:101.5px;top:30.800px;width:36px;height:59.200px;background:#866a36;border:1px solid #c48c5c;border-radius:0;box-shadow:inset 0 0 0 1.500px #5e481c"><u style="color:#f6f0e0;font-size:6px">16</u></div><div class="c" style="left:142.8px;top:30.800px;width:36px;height:59.200px;background:linear-gradient(180deg,#6b5620,#77602a);border:1px solid #c48c5c;border-radius:1.500px;box-shadow:inset 0 0 0 1.500px rgba(190,140,40,.35)"><i style="position:absolute;left:50%;top:50%;width:20px;height:20px;margin:-10px 0 0 -10px;border-radius:50%;border:1.500px dotted rgba(175,135,50,.55)"></i><i style="position:absolute;left:50%;top:50%;width:13px;height:13px;margin:-6.500px 0 0 -6.500px;border-radius:50%;border:1px dotted rgba(175,135,50,.45)"></i><u style="color:#f6f0e0;font-size:6px">4+5=</u></div></div>
<div class="lb" style="left:470px;top:235px">Magiczna karta</div>
<div class="th" style="left:686px;top:119px;background:#a59472"><div class="abs" style="left:0;top:0;width:198px;height:114px;box-shadow:inset -1px -1px 0 #4a3f2a,inset 1px 1px 0 #8a7a5a,inset 0 0 4px rgba(80,60,30,.25)"></div><svg style="left:0;top:0" width="198" height="114" viewBox="0 0 198 114" fill="none" stroke="#2a2a20" stroke-linecap="round"><path d="M198 2c-6 1-12 5-16 10M196 6c-3 4-4 10-3 16M192 4l-8 2M190 10l-6 6M194 14l-5 8M188 3l-3 6" stroke-width="1.300" stroke-dasharray="1.500 1.200"/><path d="M197 0l-9 5 5 3-4 6 6-1" stroke-width="2" stroke-dasharray="1 1.500" opacity=".8"/><path d="M0 112c4-8 5-20 4-34M2 100c4-4 8-12 9-22M1 88l8-12M3 110l12-6M6 104l14 2M10 98l8 8M2 78l6-8M20 104l14-3" stroke-width="1.200" stroke-dasharray="1.500 1.200"/><path d="M1 108l6-14 3 8 4-12M2 96l5-12" stroke-width="2" stroke-dasharray="1 1.500" opacity=".75"/><path d="M20 57c4-2 10-2 16 0M24 55l6 4M40 70l2 3" stroke-width="1.300" stroke-dasharray="1.500 1"/></svg><div class="c" style="left:13px;top:13px;width:30.8px;height:41.5px;background:radial-gradient(ellipse at 80% 12%,#dfb070,#e6c792 45%,#e8cd9c 100%);border:2px dotted #fdf6e4;outline:1px solid #fbf0d8;outline-offset:-2.500px;border-radius:0"><u style="color:#8a5a20;font-size:3.8px">1=</u></div><div class="c" style="left:48.3px;top:13px;width:30.8px;height:41.5px;background:radial-gradient(ellipse at 80% 12%,#dfb070,#e6c792 45%,#e8cd9c 100%);border:2px dotted #fdf6e4;outline:1px solid #fbf0d8;outline-offset:-2.500px;border-radius:0"><u style="color:#8a5a20;font-size:3.8px">2+2</u></div><div class="c" style="left:83.6px;top:13px;width:30.8px;height:41.5px;background:radial-gradient(ellipse at 80% 12%,#dfb070,#e6c792 45%,#e8cd9c 100%);border:2px dotted #fdf6e4;outline:1px solid #fbf0d8;outline-offset:-2.500px;border-radius:0"><u style="color:#8a5a20;font-size:3.8px">2+3</u></div><div class="c" style="left:118.9px;top:13px;width:30.8px;height:41.5px;background:radial-gradient(ellipse at 80% 12%,#dfb070,#e6c792 45%,#e8cd9c 100%);border:2px dotted #fdf6e4;outline:1px solid #fbf0d8;outline-offset:-2.500px;border-radius:0"><u style="color:#8a5a20;font-size:3.8px">4+4</u></div><div class="c" style="left:154.2px;top:13px;width:30.8px;height:41.5px;background:radial-gradient(ellipse at 80% 12%,#dfb070,#e6c792 45%,#e8cd9c 100%);border:2px dotted #fdf6e4;outline:1px solid #fbf0d8;outline-offset:-2.500px;border-radius:0"><u style="color:#8a5a20;font-size:3.8px">2+5</u></div><div class="c" style="left:13px;top:59px;width:30.8px;height:41.5px;background:radial-gradient(ellipse at 80% 12%,#dfb070,#e6c792 45%,#e8cd9c 100%);border:2px dotted #fdf6e4;outline:1px solid #fbf0d8;outline-offset:-2.500px;border-radius:0"><u style="color:#8a5a20;font-size:3.8px">6=</u></div><div class="c" style="left:48.3px;top:59px;width:30.8px;height:41.5px;background:radial-gradient(ellipse at 80% 12%,#dfb070,#e6c792 45%,#e8cd9c 100%);border:2px dotted #fdf6e4;outline:1px solid #fbf0d8;outline-offset:-2.500px;border-radius:0"><u style="color:#8a5a20;font-size:3.8px">7+7</u></div><div class="c" style="left:83.6px;top:59px;width:30.8px;height:41.5px;background:radial-gradient(ellipse at 80% 12%,#dfb070,#e6c792 45%,#e8cd9c 100%);border:2px dotted #fdf6e4;outline:1px solid #fbf0d8;outline-offset:-2.500px;border-radius:0"><u style="color:#8a5a20;font-size:3.8px">8+8</u></div><div class="c" style="left:118.9px;top:59px;width:30.8px;height:41.5px;background:radial-gradient(ellipse at 80% 12%,#dfb070,#e6c792 45%,#e8cd9c 100%);border:2px dotted #fdf6e4;outline:1px solid #fbf0d8;outline-offset:-2.500px;border-radius:0"><u style="color:#8a5a20;font-size:3.8px">9+4</u></div><div class="c" style="left:154.2px;top:59px;width:30.8px;height:41.5px;background:radial-gradient(ellipse at 80% 12%,#dfb070,#e6c792 45%,#e8cd9c 100%);border:2px dotted #fdf6e4;outline:1px solid #fbf0d8;outline-offset:-2.500px;border-radius:0"><u style="color:#8a5a20;font-size:3.8px">10+5</u></div></div>
<div class="lb" style="left:686px;top:235px">Pieczęć</div>
<div class="th" style="left:38px;top:270px;background:#36adc9"><div class="abs" style="left:0;top:0;width:198px;height:114px;background-image:linear-gradient(90deg,rgba(255,255,255,.045) 1px,transparent 1px),linear-gradient(180deg,rgba(255,255,255,.045) 1px,transparent 1px);background-size:4px 4px"></div><svg style="left:0;top:0" width="198" height="114" viewBox="0 0 198 114" fill="none" stroke="rgba(255,255,255,.62)" stroke-width=".8"><path d="M3 19c-3-3 0-7 4-7 0-5 6-7 10-5 4-3 10 0 10 4 4 0 5 5 3 8M4 23.500h15M22 21c3 1 6 0 7-2" stroke-dasharray="4 1.500"/><path d="M35 10v-5M46 4c2-1 4 0 4 2M54 9l1 1" stroke-dasharray="2 1.500"/><path d="M186 22c-2-2 0-5 2-4"/><path d="M4 112c-3-6 0-14 6-16 5-2 9 2 9 7 2 3 1 7-1 9M9 112v-8M13 112v-6" stroke-dasharray="3 1"/><path d="M19 91h17M21 89h12M24 91v20M30 94h4M33 91v8h16M35 99v12M35 103h16l-8 8M43 103l8 8M22 104h8M22 108h9"/><path d="M56.500 88.500l-4 12h8zM56.500 92v18M52 104l9 2"/><path d="M68 84.500l-5 8h3l-5 7h3.500l-5 7.500h17l-5-7.500H75l-5-7h3zM68 107v6M64 97l2 2 2-2 2 2 2-2M62 104l2 2 2-2 2 2 2-2 2 2 2-2"/><path d="M85 103V93h3v-3h3v3h6v-4h3v4h0v10zM82 103h20M79 106h24M76 110h30M76 110l-3 3M84 113h22"/><path d="M106 112c0-5 3-8 8-8 3 0 5 2 6 4h7M112 109h14M110 112h18" stroke-dasharray="5 1"/></svg><div class="c" style="left:13.7px;top:36px;width:30px;height:41.8px;background:#0d7e9c;border-radius:2px;background-image:radial-gradient(rgba(255,255,255,.09) 30%,transparent 34%),radial-gradient(rgba(0,40,60,.10) 30%,transparent 34%);background-size:3px 3px,4px 4px;background-position:0 0,1px 2px;box-shadow:0 0 0 .5px #12839f"><u style="color:#d8f0f4;font-size:4px">1=</u></div><div class="c" style="left:48.55px;top:36px;width:30px;height:41.8px;background:#0d7e9c;border-radius:2px;background-image:radial-gradient(rgba(255,255,255,.09) 30%,transparent 34%),radial-gradient(rgba(0,40,60,.10) 30%,transparent 34%);background-size:3px 3px,4px 4px;background-position:0 0,1px 2px;box-shadow:0 0 0 .5px #12839f"><u style="color:#d8f0f4;font-size:4px">2+2</u></div><div class="c" style="left:83.4px;top:36px;width:30px;height:41.8px;background:#0d7e9c;border-radius:2px;background-image:radial-gradient(rgba(255,255,255,.09) 30%,transparent 34%),radial-gradient(rgba(0,40,60,.10) 30%,transparent 34%);background-size:3px 3px,4px 4px;background-position:0 0,1px 2px;box-shadow:0 0 0 .5px #12839f"><u style="color:#d8f0f4;font-size:4px">2+3</u></div><div class="c" style="left:118.25px;top:36px;width:30px;height:41.8px;background:#0d7e9c;border-radius:2px;background-image:radial-gradient(rgba(255,255,255,.09) 30%,transparent 34%),radial-gradient(rgba(0,40,60,.10) 30%,transparent 34%);background-size:3px 3px,4px 4px;background-position:0 0,1px 2px;box-shadow:0 0 0 .5px #12839f"><u style="color:#d8f0f4;font-size:4px">4+4</u></div><div class="c" style="left:153.1px;top:36px;width:30px;height:41.8px;background:#0d7e9c;border-radius:2px;background-image:radial-gradient(rgba(255,255,255,.09) 30%,transparent 34%),radial-gradient(rgba(0,40,60,.10) 30%,transparent 34%);background-size:3px 3px,4px 4px;background-position:0 0,1px 2px;box-shadow:0 0 0 .5px #12839f"><u style="color:#d8f0f4;font-size:4px">2+5</u></div></div>
<div class="lb" style="left:38px;top:386px">Styl angielski</div>
<div class="th" style="left:254px;top:270px;background:#a8dcc8"><div class="abs" style="left:0;top:0;width:198px;height:114px;background:linear-gradient(90deg,#aee8d2 0,#a8dcc8 30%,#b4e4cc 60%,#a6dcb4 100%)"></div><div class="abs" style="left:18px;top:0;width:21px;height:114px;background:linear-gradient(180deg,#7fb0a8 0,#86b4aa 60%,#5d8f8a 85%,#4f817e 100%)"></div><div class="abs" style="left:0;top:58px;width:9px;height:56px;background:linear-gradient(180deg,rgba(100,150,145,0),#6a9a94 40%)"></div><div class="abs" style="left:124px;top:0;width:20px;height:25px;background:#6a9c9c"></div><div class="abs" style="left:132px;top:78px;width:18px;height:36px;background:#8fbcb2"></div><div class="abs" style="left:148px;top:0;width:50px;height:36px;background:radial-gradient(ellipse at 50% 30%,#9ed68c,#a6dca0 60%,rgba(170,225,170,0) 75%)"></div><div class="abs" style="left:92px;top:22px;width:112px;height:80px;border-radius:50%;background:radial-gradient(ellipse at 45% 45%,#d2f0b4,#bce8b0 60%,#b0e4b4 100%);border:1px dotted #ece85a"></div><div class="abs" style="left:110px;top:36px;width:80px;height:58px;border-radius:50%;border:1px dotted rgba(240,235,90,.8)"></div><div class="abs" style="left:62px;top:4px;width:30px;height:11px;border-radius:50%;transform:rotate(12deg);background:#a6e6dc"></div><div class="abs" style="left:92px;top:8px;width:30px;height:10px;border-radius:50%;transform:rotate(-8deg);background:#a4e4da"></div><div class="abs" style="left:64px;top:20px;width:26px;height:10px;border-radius:50%;transform:rotate(-10deg);background:#a0e0d6"></div><div class="abs" style="left:170px;top:-2px;width:34px;height:22px;border-radius:50%;transform:rotate(-15deg);background:#9fe0d4"></div><div class="abs" style="left:20px;top:86px;width:34px;height:13px;border-radius:50%;transform:rotate(-28deg);background:#96dcd0"></div><div class="abs" style="left:44px;top:86px;width:30px;height:12px;border-radius:50%;transform:rotate(18deg);background:#9ce0d4"></div><div class="abs" style="left:62px;top:80px;width:26px;height:11px;border-radius:50%;transform:rotate(0deg);background:#a0e2d6"></div><div class="abs" style="left:66px;top:104px;width:28px;height:12px;border-radius:50%;transform:rotate(-8deg);background:#9adcd0"></div><div class="abs" style="left:88px;top:82px;width:24px;height:10px;border-radius:50%;transform:rotate(10deg);background:#a6e4d8"></div><div class="abs" style="left:184px;top:28px;width:22px;height:40px;border-radius:50%;transform:rotate(0deg);background:#a8e6d8"></div><div class="abs" style="left:178px;top:88px;width:30px;height:34px;border-radius:50%;transform:rotate(0deg);background:#a4e6d6"></div><div class="abs" style="left:0px;top:0px;width:20px;height:26px;border-radius:50%;transform:rotate(0deg);background:#b6ecda"></div><div class="abs" style="left:40px;top:92px;width:158px;height:22px;background:repeating-linear-gradient(90deg,rgba(95,165,120,.38) 0 1.500px,rgba(210,240,200,.3) 1.500px 4px,rgba(120,185,140,.3) 4px 5px,rgba(200,236,196,.25) 5px 8px)"></div><div class="abs" style="left:90px;top:0;width:2.500px;height:114px;background:#8fd6c8"></div><div class="abs" style="left:27px;top:7px;width:8px;height:8px;background:#f2dc7c;border-radius:3px"></div><div class="abs" style="left:2px;top:12px;width:6px;height:7px;background:#f4cc78;border-radius:50%"></div><div class="abs" style="left:133px;top:9px;width:5px;height:4px;background:#f0c868"></div><div class="abs" style="left:174px;top:21px;width:11px;height:7px;background:#f07a62;border-radius:50% 50% 20% 20%"></div><div class="abs" style="left:178px;top:27px;width:3px;height:6px;background:#f4c8a0"></div><div class="abs" style="left:94px;top:24px;width:7px;height:7px;background:#f4a45e;border-radius:50%"></div><div class="abs" style="left:7px;top:95px;width:9px;height:6px;background:#f6d686;border-radius:50%"></div><div class="abs" style="left:71px;top:86px;width:6px;height:6px;background:#f4d27c;border-radius:50%"></div><div class="abs" style="left:190px;top:102px;width:5px;height:6px;background:#f4cc78;border-radius:50%"></div><div class="c" style="left:13.7px;top:36px;width:30.6px;height:41.8px;border-radius:0;background-image:linear-gradient(38deg,#03796c 0,#03796c 15%,rgba(3,121,108,0) 15.500%),radial-gradient(ellipse 100% 75% at -8% 48%,rgba(0,0,0,0) 0,rgba(0,0,0,0) 96%,rgba(0,70,60,.30) 97%),linear-gradient(180deg,#028e7e 0,#06a08a 70%,#0aa890 100%);box-shadow:inset 0 1px 0 rgba(40,190,165,.6)"><u style="color:#e8fff8;font-size:4px">1=</u></div><div class="c" style="left:48.7px;top:36px;width:30.6px;height:41.8px;border-radius:0;background-image:linear-gradient(38deg,#03796c 0,#03796c 15%,rgba(3,121,108,0) 15.500%),radial-gradient(ellipse 100% 75% at -8% 48%,rgba(0,0,0,0) 0,rgba(0,0,0,0) 96%,rgba(0,70,60,.30) 97%),linear-gradient(180deg,#028e7e 0,#06a08a 70%,#0aa890 100%);box-shadow:inset 0 1px 0 rgba(40,190,165,.6)"><u style="color:#e8fff8;font-size:4px">2+2</u></div><div class="c" style="left:83.7px;top:36px;width:30.6px;height:41.8px;border-radius:0;background-image:linear-gradient(38deg,#03796c 0,#03796c 15%,rgba(3,121,108,0) 15.500%),radial-gradient(ellipse 100% 75% at -8% 48%,rgba(0,0,0,0) 0,rgba(0,0,0,0) 96%,rgba(0,70,60,.30) 97%),linear-gradient(180deg,#028e7e 0,#06a08a 70%,#0aa890 100%);box-shadow:inset 0 1px 0 rgba(40,190,165,.6)"><u style="color:#e8fff8;font-size:4px">2+3</u></div><div class="c" style="left:118.7px;top:36px;width:30.6px;height:41.8px;border-radius:0;background-image:linear-gradient(38deg,#03796c 0,#03796c 15%,rgba(3,121,108,0) 15.500%),radial-gradient(ellipse 100% 75% at -8% 48%,rgba(0,0,0,0) 0,rgba(0,0,0,0) 96%,rgba(0,70,60,.30) 97%),linear-gradient(180deg,#028e7e 0,#06a08a 70%,#0aa890 100%);box-shadow:inset 0 1px 0 rgba(40,190,165,.6)"><u style="color:#e8fff8;font-size:4px">4+4</u></div><div class="c" style="left:153.7px;top:36px;width:30.6px;height:41.8px;border-radius:0;background-image:linear-gradient(38deg,#03796c 0,#03796c 15%,rgba(3,121,108,0) 15.500%),radial-gradient(ellipse 100% 75% at -8% 48%,rgba(0,0,0,0) 0,rgba(0,0,0,0) 96%,rgba(0,70,60,.30) 97%),linear-gradient(180deg,#028e7e 0,#06a08a 70%,#0aa890 100%);box-shadow:inset 0 1px 0 rgba(40,190,165,.6)"><u style="color:#e8fff8;font-size:4px">2+5</u></div></div>
<div class="lb" style="left:254px;top:386px">Miętowe lato</div>
<div class="th" style="left:470px;top:270px;background:#bef1f3"><div class="c" style="left:13px;top:36px;width:31px;height:41.5px;background:#96dbd4;border:1px solid #f4fffe;border-radius:2px"><u style="color:#123;font-size:4.5px">1=</u></div><div class="c" style="left:47.9px;top:36px;width:31px;height:41.5px;background:#96dbd4;border:1px solid #f4fffe;border-radius:2px"><u style="color:#123;font-size:4.5px">2+2</u></div><div class="c" style="left:82.8px;top:36px;width:31px;height:41.5px;background:#96dbd4;border:1px solid #f4fffe;border-radius:2px"><u style="color:#123;font-size:4.5px">2+3</u></div><div class="c" style="left:117.7px;top:36px;width:31px;height:41.5px;background:#96dbd4;border:1px solid #f4fffe;border-radius:2px"><u style="color:#123;font-size:4.5px">4+4</u></div><div class="c" style="left:152.6px;top:36px;width:31px;height:41.5px;background:#96dbd4;border:1px solid #f4fffe;border-radius:2px"><u style="color:#123;font-size:4.5px">2+5</u></div></div>
<div class="lb" style="left:470px;top:386px">Podstawowy</div>
<div class="th" style="left:686px;top:270px;background:#4fa6f2"><div class="abs" style="left:0;top:0;width:198px;height:114px;background:linear-gradient(160deg,#58b2fb 0,#4fa6f2 35%,#4a9cec 60%,#3f8fe0 100%)"></div><div class="abs" style="left:0;top:60px;width:120px;height:54px;background:rgba(255,255,255,.07);clip-path:polygon(0 30%,60% 0,100% 100%,0 100%)"></div><div class="abs" style="left:90px;top:50px;width:108px;height:64px;background:rgba(255,255,255,.10);clip-path:polygon(20% 100%,40% 30%,100% 0,100% 100%)"></div><div class="abs" style="left:40px;top:0;width:120px;height:40px;background:rgba(255,255,255,.06);clip-path:polygon(0 0,100% 0,60% 100%)"></div><div class="abs" style="left:88px;top:5px;width:1.500px;height:1.500px;border-radius:50%;background:rgba(255,255,255,.6)"></div><div class="abs" style="left:22px;top:14px;width:1.500px;height:1.500px;border-radius:50%;background:rgba(255,255,255,.6)"></div><div class="abs" style="left:70px;top:21px;width:1.500px;height:1.500px;border-radius:50%;background:rgba(255,255,255,.6)"></div><div class="abs" style="left:123px;top:21px;width:1.500px;height:1.500px;border-radius:50%;background:rgba(255,255,255,.6)"></div><div class="abs" style="left:10px;top:72px;width:1.500px;height:1.500px;border-radius:50%;background:rgba(255,255,255,.6)"></div><div class="abs" style="left:194px;top:30px;width:1.500px;height:1.500px;border-radius:50%;background:rgba(255,255,255,.6)"></div><div class="abs" style="left:44px;top:98px;width:1.500px;height:1.500px;border-radius:50%;background:rgba(255,255,255,.6)"></div><div class="abs" style="left:150px;top:100px;width:1.500px;height:1.500px;border-radius:50%;background:rgba(255,255,255,.6)"></div><div class="c" style="left:14px;top:36px;width:30px;height:41.5px;background:radial-gradient(ellipse at 50% 55%,#1c4f98,#26477e 90%);border-radius:1px;box-shadow:inset 0 0 0 .5px rgba(200,220,255,.15)"><u style="color:#e8f0ff;font-size:4.5px">1=</u></div><div class="c" style="left:48.9px;top:36px;width:30px;height:41.5px;background:radial-gradient(ellipse at 50% 55%,#1c4f98,#26477e 90%);border-radius:1px;box-shadow:inset 0 0 0 .5px rgba(200,220,255,.15)"><u style="color:#e8f0ff;font-size:4.5px">2+2</u></div><div class="c" style="left:83.8px;top:36px;width:30px;height:41.5px;background:radial-gradient(ellipse at 50% 55%,#1c4f98,#26477e 90%);border-radius:3px"><u style="color:#e8f0ff;font-size:4.5px">2+3</u></div><div class="c" style="left:118.7px;top:36px;width:30px;height:41.5px;background:radial-gradient(ellipse at 50% 55%,#1c4f98,#26477e 90%);border-radius:1px;box-shadow:inset 0 0 0 .5px rgba(200,220,255,.15)"><u style="color:#e8f0ff;font-size:4.5px">4+4</u></div><div class="c" style="left:153.6px;top:36px;width:30px;height:41.5px;background:radial-gradient(ellipse at 50% 55%,#1c4f98,#26477e 90%);border-radius:1px;box-shadow:inset 0 0 0 .5px rgba(200,220,255,.15)"><u style="color:#e8f0ff;font-size:4.5px">2+5</u></div></div>
<div class="lb" style="left:686px;top:386px">Wielokąt</div>
<div class="th" style="left:38px;top:421px;background:#6cbcea"><div class="abs" style="left:-2px;top:80px;width:38px;height:36px;background:#2d6db2;clip-path:polygon(0 8%,22% 0,38% 12%,62% 20%,100% 55%,82% 72%,72% 62%,62% 100%,0 100%)"></div><div class="abs" style="left:6px;top:91px;width:9px;height:9px;border-radius:50%;background:#f7e884;box-shadow:inset -2.500px -1px 0 #2d6db2"></div><div class="abs" style="left:8px;top:102px;width:10px;height:8px;border-radius:50%;background:#8cc8ec"></div><div class="abs" style="left:19px;top:78px;width:10px;height:5px;background:#f4f4e8;clip-path:polygon(0 0,100% 0,50% 100%)"></div><div class="abs" style="left:157px;top:86px;width:30px;height:30px;border-radius:48% 48% 30% 30%;background:#b9cfe3"></div><div class="abs" style="left:154px;top:100px;width:36px;height:18px;border-radius:50% 50% 20% 20%;background:#b4cbe0"></div><div class="abs" style="left:156px;top:84px;width:9px;height:9px;border-radius:50%;background:#c3d6e8"></div><div class="abs" style="left:177px;top:85px;width:9px;height:9px;border-radius:50%;background:#c3d6e8"></div><div class="abs" style="left:163px;top:77px;width:26px;height:13px;background:#2d6db2;clip-path:polygon(0 100%,12% 30%,55% 0,100% 85%,92% 95%,62% 45%,70% 100%)"></div><div class="abs" style="left:166px;top:104px;width:14px;height:10px;border-radius:50%;background:#d6e4f0"></div><div class="abs" style="left:161px;top:96px;width:5px;height:3.500px;border-radius:50%;background:#f6aac4"></div><div class="abs" style="left:175px;top:96px;width:5px;height:3.500px;border-radius:50%;background:#f6aac4"></div><div class="abs" style="left:168px;top:95px;width:6px;height:1px;background:#5a6a8a"></div><div class="abs" style="left:143px;top:93px;width:10.500px;height:10.500px;border-radius:50%;background:#2a62a6"></div><div class="abs" style="left:141px;top:102px;width:1.500px;height:9px;background:#2a4a8a;transform:rotate(32deg)"></div><div class="abs" style="left:8.500px;top:8px;width:9px;height:8px;border-radius:40%;background:#2b64a8"></div><div class="abs" style="left:13px;top:8px;width:3px;height:3px;border-radius:50%;background:#f0a6c0"></div><div class="abs" style="left:148px;top:10px;width:8px;height:8px;background:#f6d63c;clip-path:polygon(50% 0,62% 36%,100% 38%,70% 60%,80% 100%,50% 76%,20% 100%,30% 60%,0 38%,38% 36%)"></div><div class="abs" style="left:164px;top:8px;width:8px;height:8px;background:#f6d63c;clip-path:polygon(50% 0,62% 36%,100% 38%,70% 60%,80% 100%,50% 76%,20% 100%,30% 60%,0 38%,38% 36%)"></div><div class="abs" style="left:177.500px;top:7.500px;width:8.500px;height:8.500px;border-radius:50%;background:#f8b42c;box-shadow:0 0 0 1px #f8d040"></div><div class="abs" style="left:158px;top:16px;width:7px;height:7px;border-radius:50%;background:#f7e67a;box-shadow:inset 2.500px -1px 0 #6cbcea"></div><div class="abs" style="left:170.500px;top:16px;width:10px;height:6px;border-radius:3px 3px 1px 1px;background:#a8cfe6"></div><div class="abs" style="left:190px;top:44.500px;width:7px;height:7px;background:#f6da4a;clip-path:polygon(50% 0,62% 36%,100% 38%,70% 60%,80% 100%,50% 76%,20% 100%,30% 60%,0 38%,38% 36%)"></div><div class="abs" style="left:6px;top:37.500px;width:5px;height:5px;background:#f6e46a;clip-path:polygon(50% 0,62% 36%,100% 38%,70% 60%,80% 100%,50% 76%,20% 100%,30% 60%,0 38%,38% 36%)"></div><div class="abs" style="left:32px;top:26.500px;width:2px;height:2px;background:#f6e27a"></div><div class="abs" style="left:12px;top:62px;width:1.500px;height:1.500px;background:#f6e27a"></div><div class="abs" style="left:66px;top:78px;width:1.500px;height:1.500px;background:#f6e27a"></div><div class="abs" style="left:154px;top:2px;width:32px;height:8px;border-top:1px dashed #3a4a8a;border-radius:50%"></div><div class="c" style="left:14.2px;top:36.2px;width:30px;height:41.5px;background:radial-gradient(ellipse 48% 47% at 50% 50%,#cde9ec 0,#cde9ec 93%,#e6f1ec 100%);border:1px solid #2272bc;border-radius:3px;box-shadow:inset 0 0 0 1px rgba(176,200,168,.55)"><u style="color:#4a8ac0;font-size:4px">1=</u></div><div class="c" style="left:49.1px;top:36.2px;width:30px;height:41.5px;background:radial-gradient(ellipse 48% 47% at 50% 50%,#cde9ec 0,#cde9ec 93%,#e6f1ec 100%);border:1px solid #2272bc;border-radius:3px;box-shadow:inset 0 0 0 1px rgba(176,200,168,.55)"><u style="color:#4a8ac0;font-size:4px">2+2</u></div><div class="c" style="left:84px;top:36.2px;width:30px;height:41.5px;background:radial-gradient(ellipse 48% 47% at 50% 50%,#cde9ec 0,#cde9ec 93%,#e6f1ec 100%);border:1px solid #2272bc;border-radius:3px;box-shadow:inset 0 0 0 1px rgba(176,200,168,.55)"><u style="color:#4a8ac0;font-size:4px">2+3</u></div><div class="c" style="left:118.9px;top:36.2px;width:30px;height:41.5px;background:radial-gradient(ellipse 48% 47% at 50% 50%,#cde9ec 0,#cde9ec 93%,#e6f1ec 100%);border:1px solid #2272bc;border-radius:3px;box-shadow:inset 0 0 0 1px rgba(176,200,168,.55)"><u style="color:#4a8ac0;font-size:4px">4+4</u></div><div class="c" style="left:153.8px;top:36.2px;width:30px;height:41.5px;background:radial-gradient(ellipse 48% 47% at 50% 50%,#cde9ec 0,#cde9ec 93%,#e6f1ec 100%);border:1px solid #2272bc;border-radius:3px;box-shadow:inset 0 0 0 1px rgba(176,200,168,.55)"><u style="color:#4a8ac0;font-size:4px">2+5</u></div></div>
<div class="lb" style="left:38px;top:537px">Prostota</div>
<div class="th" style="left:254px;top:421px;background:#1d2139"><div class="abs" style="left:0;top:0;width:198px;height:114px;background:radial-gradient(ellipse at 62% 22%,#363e60 0,#2b3152 38%,#1d2139 80%,#171a2e 100%)"></div><div class="abs" style="left:0;top:0;width:100px;height:114px;background:linear-gradient(90deg,#0b0d1e 0,#0e1124 45%,rgba(20,24,48,.6) 75%,rgba(30,34,60,0) 100%)"></div><div class="abs" style="left:4px;top:12px;width:74px;height:15px;border-radius:50%;transform:rotate(27deg);background:radial-gradient(ellipse,#38467e 0,rgba(50,62,120,.5) 45%,rgba(40,50,100,0) 72%)"></div><div class="abs" style="left:30px;top:18px;width:50px;height:12px;border-radius:50%;transform:rotate(40deg);background:radial-gradient(ellipse,#2c386c 0,rgba(40,50,100,0) 70%)"></div><div class="abs" style="left:-6px;top:36px;width:18px;height:40px;border-radius:50%;background:radial-gradient(ellipse,#334078 0,rgba(40,50,100,0) 70%)"></div><div class="abs" style="left:-4px;top:84px;width:80px;height:13px;border-radius:50%;transform:rotate(20deg);background:radial-gradient(ellipse,#2e3a70 0,rgba(46,58,112,.5) 45%,rgba(40,50,100,0) 72%)"></div><div class="abs" style="left:16px;top:2px;width:40px;height:10px;border-radius:50%;transform:rotate(25deg);background:radial-gradient(ellipse,#06070f 0,rgba(6,7,15,0) 72%)"></div><div class="abs" style="left:56px;top:78px;width:40px;height:30px;border-radius:50%;background:radial-gradient(ellipse,rgba(8,9,20,.85) 0,rgba(8,9,20,0) 70%)"></div><div class="abs" style="left:8px;top:30px;width:18px;height:10px;border-radius:50%;background:radial-gradient(ellipse,rgba(5,6,14,.9) 0,rgba(5,6,14,0) 70%)"></div><div class="c" style="left:13.4px;top:36px;width:30.6px;height:41.8px;border-radius:1px;box-shadow:0 0 0 .5px #4c4c52,0 1px 0 .5px #66666c;background-color:#1b191d;background-image:radial-gradient(ellipse at 100% 0,rgba(95,95,102,.75) 0,rgba(70,70,78,.45) 26%,rgba(60,60,70,0) 38%),radial-gradient(ellipse at 0 100%,rgba(95,95,102,.6) 0,rgba(70,70,78,.4) 34%,rgba(60,60,70,0) 48%),radial-gradient(ellipse at 40% 45%,#27252b,#19171b 80%)"><u style="color:#dde;font-size:4.5px">1=</u></div><div class="c" style="left:48.3px;top:36px;width:30.6px;height:41.8px;border-radius:1px;box-shadow:0 0 0 .5px #4c4c52,0 1px 0 .5px #66666c;background-color:#1b191d;background-image:radial-gradient(ellipse at 100% 0,rgba(95,95,102,.75) 0,rgba(70,70,78,.45) 26%,rgba(60,60,70,0) 38%),radial-gradient(ellipse at 0 100%,rgba(95,95,102,.6) 0,rgba(70,70,78,.4) 34%,rgba(60,60,70,0) 48%),radial-gradient(ellipse at 40% 45%,#27252b,#19171b 80%)"><u style="color:#dde;font-size:4.5px">2+2</u></div><div class="c" style="left:83.2px;top:36px;width:30.6px;height:41.8px;border-radius:1px;box-shadow:0 0 0 .5px #4c4c52,0 1px 0 .5px #66666c;background-color:#1b191d;background-image:radial-gradient(ellipse at 100% 0,rgba(95,95,102,.75) 0,rgba(70,70,78,.45) 26%,rgba(60,60,70,0) 38%),radial-gradient(ellipse at 0 100%,rgba(95,95,102,.6) 0,rgba(70,70,78,.4) 34%,rgba(60,60,70,0) 48%),radial-gradient(ellipse at 40% 45%,#27252b,#19171b 80%)"><u style="color:#dde;font-size:4.5px">2+3</u></div><div class="c" style="left:118.1px;top:36px;width:30.6px;height:41.8px;border-radius:1px;box-shadow:0 0 0 .5px #4c4c52,0 1px 0 .5px #66666c;background-color:#1b191d;background-image:radial-gradient(ellipse at 100% 0,rgba(95,95,102,.75) 0,rgba(70,70,78,.45) 26%,rgba(60,60,70,0) 38%),radial-gradient(ellipse at 0 100%,rgba(95,95,102,.6) 0,rgba(70,70,78,.4) 34%,rgba(60,60,70,0) 48%),radial-gradient(ellipse at 40% 45%,#27252b,#19171b 80%)"><u style="color:#dde;font-size:4.5px">4+4</u></div><div class="c" style="left:153px;top:36px;width:30.6px;height:41.8px;border-radius:1px;box-shadow:0 0 0 .5px #4c4c52,0 1px 0 .5px #66666c;background-color:#1b191d;background-image:radial-gradient(ellipse at 100% 0,rgba(95,95,102,.75) 0,rgba(70,70,78,.45) 26%,rgba(60,60,70,0) 38%),radial-gradient(ellipse at 0 100%,rgba(95,95,102,.6) 0,rgba(70,70,78,.4) 34%,rgba(60,60,70,0) 48%),radial-gradient(ellipse at 40% 45%,#27252b,#19171b 80%)"><u style="color:#dde;font-size:4.5px">2+5</u></div></div>
<div class="lb" style="left:254px;top:537px">Elegancja</div>
<div class="th" style="left:470px;top:421px;background:#d8d4c8"><div class="abs" style="left:0;top:0;width:198px;height:114px;background:linear-gradient(180deg,#d8d4c8 0,#dedad0 30%,#d4d0c4 70%,#dad6ca 100%)"></div><div class="abs" style="left:40px;top:4px;width:140px;height:30px;background:radial-gradient(ellipse at 50% 60%,rgba(170,170,160,.55),rgba(170,170,160,0) 70%)"></div><div class="abs" style="left:0;top:84px;width:130px;height:30px;background:radial-gradient(ellipse at 40% 50%,rgba(190,186,172,.7),rgba(190,186,172,0) 70%)"></div><div class="abs" style="left:130px;top:90px;width:72px;height:30px;background:radial-gradient(ellipse at 50% 60%,rgba(110,114,110,.5),rgba(130,130,120,.25) 45%,rgba(120,120,110,0) 72%)"></div><div class="abs" style="left:136px;top:102px;width:14px;height:7px;background:radial-gradient(ellipse,rgba(60,64,60,.7),rgba(60,60,60,0) 70%)"></div><div class="abs" style="left:0;top:46px;width:30px;height:28px;background:radial-gradient(ellipse at 30% 50%,rgba(180,178,168,.6),rgba(180,178,168,0) 70%)"></div><div class="abs" style="left:150px;top:2px;width:50px;height:34px;background:radial-gradient(ellipse at 60% 50%,rgba(185,183,172,.6),rgba(180,178,168,0) 70%)"></div><div class="abs" style="left:158px;top:88px;width:34px;height:20px;background:radial-gradient(ellipse at 50% 60%,rgba(90,94,90,.6),rgba(120,120,110,0) 70%)"></div><div class="abs" style="left:0;top:8px;width:46px;height:1px;background:#2a2420;transform:rotate(22deg);transform-origin:0 0"></div><div class="abs" style="left:10px;top:14px;width:16px;height:1px;background:#2a2420;transform:rotate(55deg);transform-origin:0 0"></div><div class="abs" style="left:4px;top:6px;width:3px;height:3px;border-radius:50%;background:#f6e6e4;box-shadow:.5px .5px 0 #e05a5a"></div><div class="abs" style="left:12px;top:12px;width:3px;height:3px;border-radius:50%;background:#f6e6e4;box-shadow:.5px .5px 0 #e05a5a"></div><div class="abs" style="left:22px;top:15px;width:3px;height:3px;border-radius:50%;background:#f6e6e4;box-shadow:.5px .5px 0 #e05a5a"></div><div class="abs" style="left:30px;top:22px;width:3px;height:3px;border-radius:50%;background:#f6e6e4;box-shadow:.5px .5px 0 #e05a5a"></div><div class="abs" style="left:40px;top:24px;width:3px;height:3px;border-radius:50%;background:#f6e6e4;box-shadow:.5px .5px 0 #e05a5a"></div><div class="abs" style="left:18px;top:26px;width:3px;height:3px;border-radius:50%;background:#f6e6e4;box-shadow:.5px .5px 0 #e05a5a"></div><div class="abs" style="left:2px;top:14px;width:3px;height:3px;border-radius:50%;background:#f6e6e4;box-shadow:.5px .5px 0 #e05a5a"></div><div class="abs" style="left:38px;top:83px;width:8px;height:3px;border-radius:50%;background:#5a5a58"></div><div class="c" style="left:14px;top:36px;width:30px;height:41.5px;background:radial-gradient(ellipse at 50% 40%,#f9f5ea,#efe8d6 90%);border:1.500px solid #c6a272;border-bottom-color:#b08858;border-radius:0;box-shadow:0 0 0 .5px #d4b48c,inset 0 -12px 8px -8px rgba(190,180,150,.35)"><i style="position:absolute;left:2.500px;top:2.500px;width:5px;height:4.500px;border-left:1px solid #c0201c;border-top:1px solid #c0201c"></i><i style="position:absolute;right:2.500px;top:2.500px;width:5px;height:4.500px;border-right:1px solid #c0201c;border-top:1px solid #c0201c"></i><i style="position:absolute;left:2.500px;bottom:2.500px;width:5px;height:4.500px;border-left:1px solid #c0201c;border-bottom:1px solid #c0201c"></i><i style="position:absolute;right:2.500px;bottom:2.500px;width:5px;height:4.500px;border-right:1px solid #c0201c;border-bottom:1px solid #c0201c"></i><u style="color:#6a4a20;font-size:4.5px">1=</u></div><div class="c" style="left:49px;top:36px;width:30px;height:41.5px;background:radial-gradient(ellipse at 50% 40%,#f9f5ea,#efe8d6 90%);border:1.500px solid #c6a272;border-bottom-color:#b08858;border-radius:0;box-shadow:0 0 0 .5px #d4b48c,inset 0 -12px 8px -8px rgba(190,180,150,.35)"><i style="position:absolute;left:2.500px;top:2.500px;width:5px;height:4.500px;border-left:1px solid #c0201c;border-top:1px solid #c0201c"></i><i style="position:absolute;right:2.500px;top:2.500px;width:5px;height:4.500px;border-right:1px solid #c0201c;border-top:1px solid #c0201c"></i><i style="position:absolute;left:2.500px;bottom:2.500px;width:5px;height:4.500px;border-left:1px solid #c0201c;border-bottom:1px solid #c0201c"></i><i style="position:absolute;right:2.500px;bottom:2.500px;width:5px;height:4.500px;border-right:1px solid #c0201c;border-bottom:1px solid #c0201c"></i><u style="color:#6a4a20;font-size:4.5px">2+2</u></div><div class="c" style="left:84px;top:36px;width:30px;height:41.5px;background:radial-gradient(ellipse at 50% 40%,#f9f5ea,#efe8d6 90%);border:1.500px solid #c6a272;border-bottom-color:#b08858;border-radius:0;box-shadow:0 0 0 .5px #d4b48c,inset 0 -12px 8px -8px rgba(190,180,150,.35)"><i style="position:absolute;left:2.500px;top:2.500px;width:5px;height:4.500px;border-left:1px solid #c0201c;border-top:1px solid #c0201c"></i><i style="position:absolute;right:2.500px;top:2.500px;width:5px;height:4.500px;border-right:1px solid #c0201c;border-top:1px solid #c0201c"></i><i style="position:absolute;left:2.500px;bottom:2.500px;width:5px;height:4.500px;border-left:1px solid #c0201c;border-bottom:1px solid #c0201c"></i><i style="position:absolute;right:2.500px;bottom:2.500px;width:5px;height:4.500px;border-right:1px solid #c0201c;border-bottom:1px solid #c0201c"></i><u style="color:#6a4a20;font-size:4.5px">2+3</u></div><div class="c" style="left:119px;top:36px;width:30px;height:41.5px;background:radial-gradient(ellipse at 50% 40%,#f9f5ea,#efe8d6 90%);border:1.500px solid #c6a272;border-bottom-color:#b08858;border-radius:0;box-shadow:0 0 0 .5px #d4b48c,inset 0 -12px 8px -8px rgba(190,180,150,.35)"><i style="position:absolute;left:2.500px;top:2.500px;width:5px;height:4.500px;border-left:1px solid #c0201c;border-top:1px solid #c0201c"></i><i style="position:absolute;right:2.500px;top:2.500px;width:5px;height:4.500px;border-right:1px solid #c0201c;border-top:1px solid #c0201c"></i><i style="position:absolute;left:2.500px;bottom:2.500px;width:5px;height:4.500px;border-left:1px solid #c0201c;border-bottom:1px solid #c0201c"></i><i style="position:absolute;right:2.500px;bottom:2.500px;width:5px;height:4.500px;border-right:1px solid #c0201c;border-bottom:1px solid #c0201c"></i><u style="color:#6a4a20;font-size:4.5px">4+4</u></div><div class="c" style="left:154px;top:36px;width:30px;height:41.5px;background:radial-gradient(ellipse at 50% 40%,#f9f5ea,#efe8d6 90%);border:1.500px solid #c6a272;border-bottom-color:#b08858;border-radius:0;box-shadow:0 0 0 .5px #d4b48c,inset 0 -12px 8px -8px rgba(190,180,150,.35)"><i style="position:absolute;left:2.500px;top:2.500px;width:5px;height:4.500px;border-left:1px solid #c0201c;border-top:1px solid #c0201c"></i><i style="position:absolute;right:2.500px;top:2.500px;width:5px;height:4.500px;border-right:1px solid #c0201c;border-top:1px solid #c0201c"></i><i style="position:absolute;left:2.500px;bottom:2.500px;width:5px;height:4.500px;border-left:1px solid #c0201c;border-bottom:1px solid #c0201c"></i><i style="position:absolute;right:2.500px;bottom:2.500px;width:5px;height:4.500px;border-right:1px solid #c0201c;border-bottom:1px solid #c0201c"></i><u style="color:#6a4a20;font-size:4.5px">2+5</u></div></div>
<div class="lb" style="left:470px;top:537px">Natura</div>
<div class="th" style="left:686px;top:421px;background:#eaa970"><div class="abs" style="left:0;top:0;width:198px;height:114px;background:linear-gradient(180deg,#e6a26a 0,#eaa970 25%,#f0b680 55%,#f2c08a 75%,#f4cc90 100%)"></div><div class="abs" style="left:30px;top:12px;width:60px;height:3px;border-radius:50%;background:rgba(250,205,160,.7)"></div><div class="abs" style="left:0;top:30px;width:70px;height:14px;border-radius:50%;background:rgba(240,185,140,.55)"></div><div class="abs" style="left:120px;top:32px;width:80px;height:12px;border-radius:50%;background:rgba(240,185,140,.5)"></div><div class="abs" style="left:90px;top:78px;width:130px;height:50px;background:#eeb27a;clip-path:polygon(0 45%,15% 20%,30% 30%,50% 5%,75% 30%,100% 20%,100% 100%,0 100%)"></div><div class="abs" style="left:0;top:88px;width:198px;height:30px;background:#f2c285;clip-path:polygon(0 30%,25% 45%,50% 10%,70% 40%,100% 25%,100% 100%,0 100%)"></div><div class="abs" style="left:0;top:100px;width:198px;height:14px;background:#f4cf94;clip-path:polygon(0 40%,30% 10%,60% 60%,100% 30%,100% 100%,0 100%)"></div><div class="abs" style="left:30px;top:92px;width:70px;height:14px;background:#ecae76;clip-path:polygon(0 60%,20% 20%,60% 40%,100% 100%,0 100%)"></div><div class="c" style="left:14px;top:36px;width:30px;height:41.5px;background:radial-gradient(ellipse at 50% 45%,#df9450,#d4863f 90%);border:1px solid #c27636;border-radius:2px;box-shadow:0 1px 0 #b86c30"><i style="position:absolute;left:-1px;top:-1px;width:4px;height:4px;background:#f6c928;border-radius:1px"></i><i style="position:absolute;right:-1px;top:-1px;width:4px;height:4px;background:#f6c928;border-radius:1px"></i><i style="position:absolute;left:-1px;bottom:-1px;width:4px;height:4px;background:#f6c928;border-radius:1px"></i><i style="position:absolute;right:-1px;bottom:-1px;width:4px;height:4px;background:#f6c928;border-radius:1px"></i><u style="color:#fbe6c8;font-size:4.5px">1=</u></div><div class="c" style="left:49px;top:36px;width:30px;height:41.5px;background:radial-gradient(ellipse at 50% 45%,#df9450,#d4863f 90%);border:1px solid #c27636;border-radius:2px;box-shadow:0 1px 0 #b86c30"><i style="position:absolute;left:-1px;top:-1px;width:4px;height:4px;background:#f6c928;border-radius:1px"></i><i style="position:absolute;right:-1px;top:-1px;width:4px;height:4px;background:#f6c928;border-radius:1px"></i><i style="position:absolute;left:-1px;bottom:-1px;width:4px;height:4px;background:#f6c928;border-radius:1px"></i><i style="position:absolute;right:-1px;bottom:-1px;width:4px;height:4px;background:#f6c928;border-radius:1px"></i><u style="color:#fbe6c8;font-size:4.5px">2+2</u></div><div class="c" style="left:84px;top:36px;width:30px;height:41.5px;background:radial-gradient(ellipse at 50% 45%,#df9450,#d4863f 90%);border:1px solid #c27636;border-radius:2px;box-shadow:0 1px 0 #b86c30"><i style="position:absolute;left:-1px;top:-1px;width:4px;height:4px;background:#f6c928;border-radius:1px"></i><i style="position:absolute;right:-1px;top:-1px;width:4px;height:4px;background:#f6c928;border-radius:1px"></i><i style="position:absolute;left:-1px;bottom:-1px;width:4px;height:4px;background:#f6c928;border-radius:1px"></i><i style="position:absolute;right:-1px;bottom:-1px;width:4px;height:4px;background:#f6c928;border-radius:1px"></i><u style="color:#fbe6c8;font-size:4.5px">2+3</u></div><div class="c" style="left:119px;top:36px;width:30px;height:41.5px;background:radial-gradient(ellipse at 50% 45%,#df9450,#d4863f 90%);border:1px solid #c27636;border-radius:2px;box-shadow:0 1px 0 #b86c30"><i style="position:absolute;left:-1px;top:-1px;width:4px;height:4px;background:#f6c928;border-radius:1px"></i><i style="position:absolute;right:-1px;top:-1px;width:4px;height:4px;background:#f6c928;border-radius:1px"></i><i style="position:absolute;left:-1px;bottom:-1px;width:4px;height:4px;background:#f6c928;border-radius:1px"></i><i style="position:absolute;right:-1px;bottom:-1px;width:4px;height:4px;background:#f6c928;border-radius:1px"></i><u style="color:#fbe6c8;font-size:4.5px">4+4</u></div><div class="c" style="left:154px;top:36px;width:30px;height:41.5px;background:radial-gradient(ellipse at 50% 45%,#df9450,#d4863f 90%);border:1px solid #c27636;border-radius:2px;box-shadow:0 1px 0 #b86c30"><i style="position:absolute;left:-1px;top:-1px;width:4px;height:4px;background:#f6c928;border-radius:1px"></i><i style="position:absolute;right:-1px;top:-1px;width:4px;height:4px;background:#f6c928;border-radius:1px"></i><i style="position:absolute;left:-1px;bottom:-1px;width:4px;height:4px;background:#f6c928;border-radius:1px"></i><i style="position:absolute;right:-1px;bottom:-1px;width:4px;height:4px;background:#f6c928;border-radius:1px"></i><u style="color:#fbe6c8;font-size:4.5px">2+5</u></div></div>
<div class="lb" style="left:686px;top:537px">Pustynia</div>
<!--THUMBS-END-->
<div id="dfoot">
<div class="abs" style="left:800px;top:12px;width:108px;height:32px;border-radius:2px;background:#2197d4;color:#fff;font-size:13px;line-height:34px;text-align:center">Zastosuj</div>
</div>
</div>
<!-- TASKBAR -->
<div id="task">

<!-- start -->
<svg style="left:20px;top:15px" width="20" height="20" viewBox="0 0 20 20"><path d="M0 2.800L8.200 1.700v7.800H0zM9.200 1.500L20 0v9.500H9.200zM0 10.500h8.200v7.800L0 17.200zM9.200 10.500H20V20L9.200 18.500z" fill="#000"/></svg>
<!-- search -->
<div class="abs" style="left:60px;top:0;width:430px;height:50px;background:#fff;border:1px solid #a9b7bd;border-bottom:0;overflow:hidden">
 <svg style="left:14px;top:14px" width="22" height="22" viewBox="0 0 22 22"><circle cx="13.500" cy="8" r="6" fill="none" stroke="#222" stroke-width="1.500"/><path d="M9.300 12.300L1.500 20" stroke="#222" stroke-width="1.600"/></svg>
 <div class="abs" style="left:49px;top:12px;font-size:18.600px;line-height:26px;color:#333;white-space:nowrap">Wpisz tu wyszukiwane słowa</div>
 <!-- picture -->
 <div class="abs" style="left:336px;top:1px;width:94px;height:48px">
  <div class="abs" style="left:20px;top:10px;width:80px;height:50px;background:#3f6a78;clip-path:polygon(0 100%,20% 50%,30% 30%,42% 45%,60% 5%,80% 10%,100% 30%,100% 100%)"></div>
  <div class="abs" style="left:48px;top:8px;width:50px;height:44px;background:#7fa05a;clip-path:polygon(0 100%,30% 40%,55% 10%,80% 15%,100% 35%,100% 100%)"></div>
  <div class="abs" style="left:70px;top:14px;width:30px;height:36px;background:#a9b85a;clip-path:polygon(0 100%,40% 30%,100% 20%,100% 100%)"></div>
  <div class="abs" style="left:8px;top:20px;width:50px;height:30px;background:#4f8a72;clip-path:polygon(0 100%,50% 0,70% 30%,100% 100%)"></div>
  <div class="abs" style="left:34px;top:8px;width:42px;height:42px;border-radius:50%;background:radial-gradient(circle,#8d7fc0 0,#8d7fc0 18%,#f0a0b0 30%,#f7c8a0 45%,#e8e6a0 58%,#b8dca0 72%,rgba(180,220,160,0) 76%)"></div>
  <div class="abs" style="left:0;top:40px;width:94px;height:20px;border-radius:50% 50% 0 0;background:#c89c2e"></div>
  <div class="abs" style="left:51px;top:18px;width:7px;height:7px;border-radius:50%;background:#2e2a4a"></div>
  <div class="abs" style="left:48px;top:25px;width:13px;height:22px;background:#2e2a4a;clip-path:polygon(25% 0,75% 0,90% 45%,70% 50%,85% 100%,60% 100%,50% 60%,40% 100%,15% 100%,30% 50%,10% 45%)"></div>
  <div class="abs" style="left:22px;top:6px;width:8px;height:8px;background:#d65fe0;clip-path:polygon(50% 0,65% 35%,100% 50%,65% 65%,50% 100%,35% 65%,0 50%,35% 35%)"></div>
  <div class="abs" style="left:63px;top:4px;width:5px;height:5px;border-radius:50%;background:#f0a020"></div>
  <div class="abs" style="left:5px;top:24px;width:5px;height:5px;border-radius:50%;background:#3db85a"></div>
 </div>
</div>
<!-- task view -->
<svg style="left:508px;top:14px" width="24" height="22" viewBox="0 0 24 22" fill="none" stroke="#111" stroke-width="1.600"><path d="M2.800 1v18.800M14.500 1v18.800M2.200 2.400h13M2.800 6.800h11.700M2.800 16.300h11.700M2.200 19h13M20.700 1v18.800"/><rect x="19.500" y="6.800" width="2.500" height="2.900" fill="#111" stroke="none"/></svg>
<!-- edge -->
<svg style="left:569px;top:10px" width="30" height="30" viewBox="0 0 30 30"><defs><linearGradient id="eg1" x1="0" y1="0" x2="1" y2="1"><stop offset="0" stop-color="#35c1f1"/><stop offset="1" stop-color="#0c59a4"/></linearGradient><linearGradient id="eg2" x1="0" y1="0" x2="1" y2="0"><stop offset="0" stop-color="#2fb4ea"/><stop offset="1" stop-color="#58d860"/></linearGradient></defs><circle cx="15" cy="15" r="14.500" fill="url(#eg1)"/><path d="M.8 13C2 5 8 .5 15 .5c8 0 14 5.500 14.500 12 .2 4-2.500 6.500-6 6.500-3 0-4.500-1.500-4-3 .5-1.200 1-2 .5-3.500C19 9.500 15.500 8 12 9c-5 1.500-7 7-5 12C3 19.500.2 16.500.8 13z" fill="url(#eg2)"/><path d="M11 17c0 5 4 9.500 9 9.500 3 0 5.500-1 7.500-3.500-2 4-6.500 6.500-12 6.500C9 29.500 4 25 5.500 18 6.500 14 9 12 12 12c-1 1.500-1 3-1 5z" fill="#1565b8"/></svg>
<!-- explorer -->
<svg style="left:631px;top:11.500px" width="30" height="26" viewBox="0 0 32 28"><path d="M1 3.500A1.500 1.500 0 0 1 2.500 2h9l2.500 3H29a1.500 1.500 0 0 1 1.500 1.500V9H1z" fill="#e9a520"/><rect x="1" y="6.500" width="30" height="19" rx="1.500" fill="#fcd667"/><path d="M7 25.500v-8a1 1 0 0 1 1-1h16a1 1 0 0 1 1 1v8z" fill="#3f9be6"/><rect x="11" y="20" width="10" height="5.500" fill="#fcd667"/></svg>
<!-- outlook -->
<svg style="left:692px;top:9px" width="34" height="34" viewBox="0 0 34 34"><rect x="10" y="1" width="20" height="22" rx="1.500" fill="#1a73c8"/><rect x="14" y="3" width="8" height="6" fill="#35a4ea"/><rect x="22" y="3" width="8" height="6" fill="#5cc0f4"/><rect x="14" y="9" width="8" height="6" fill="#1567b8"/><rect x="22" y="9" width="8" height="6" fill="#2a8ad8"/><rect x="1" y="6" width="15" height="15" rx="1.500" fill="#0f5aa8"/><circle cx="8.500" cy="13.500" r="3.800" fill="none" stroke="#fff" stroke-width="2"/><rect x="15" y="18" width="18" height="14" rx="1" fill="#f2b56a"/><path d="M15 19l9 7 9-7" fill="none" stroke="#fbe3bd" stroke-width="1.500"/></svg>
<!-- chrome -->
<svg style="left:755px;top:10px" width="30" height="30" viewBox="0 0 30 30"><circle cx="15" cy="15" r="14.500" fill="#fbc116"/><path d="M15 .5A14.500 14.500 0 0 1 27.600 7.800H15a7.200 7.200 0 0 0-6.300 3.600L2.400 7.800A14.500 14.500 0 0 1 15 .5z" fill="#e33b2e"/><path d="M2.400 7.800l6.300 10.800A7.200 7.200 0 0 0 15 22.200l-4 7.100A14.500 14.500 0 0 1 2.400 7.800z" fill="#2da94f"/><circle cx="15" cy="15" r="6.800" fill="#fff"/><circle cx="15" cy="15" r="5.400" fill="#4285f4"/></svg>
<!-- paint -->
<svg style="left:815px;top:9px" width="32" height="32" viewBox="0 0 32 32"><path d="M14 8c8-1 14 3 14 10 0 6-6 10-13 10-4 0-5-2-4-4 1-2 0-3-2-3-5 0-7-3-6-6 1-4 5-6 11-7z" fill="#d3e2ef" stroke="#9db4ca" stroke-width="1"/><circle cx="9" cy="15.500" r="2.200" fill="#e3423a"/><circle cx="14" cy="12.500" r="2.200" fill="#f0b323"/><circle cx="19.500" cy="13" r="2.200" fill="#44a85a"/><circle cx="23" cy="17.500" r="2.200" fill="#3f7fd8"/><path d="M27.500 3l1.500 1-9.500 19-2-1z" fill="#c8813a"/><path d="M27 1.500l3 2-1 2.500-3-2z" fill="#e9c89a"/></svg>
<!-- messenger -->
<svg style="left:879px;top:10px" width="30" height="30" viewBox="0 0 30 30"><defs><linearGradient id="mg" x1="0" y1="1" x2="1" y2="0"><stop offset="0" stop-color="#1a8cff"/><stop offset=".5" stop-color="#a033ff"/><stop offset="1" stop-color="#ff5c87"/></linearGradient></defs><path d="M15 .5C6.800.5.500 6.500.500 14.500c0 4.200 1.700 7.800 4.500 10.300v4.700l4.300-2.400c1.800.5 3.700.8 5.700.8 8.200 0 14.500-6 14.500-14S23.200.5 15 .5z" fill="url(#mg)"/><path d="M6 18.500l4.800-7.600 4.400 3.300 5.200-3.300 3.600 0-4.800 7.600-4.400-3.300-5.200 3.300z" fill="#fff"/></svg>
<!-- word -->
<svg style="left:939px;top:9px" width="32" height="32" viewBox="0 0 32 32"><rect x="9" y="2" width="22" height="28" rx="1.500" fill="#2b7cd3"/><rect x="9" y="2" width="22" height="7" fill="#41a5ee"/><rect x="9" y="16" width="22" height="7" fill="#185abd"/><rect x="9" y="23" width="22" height="7" fill="#103f91"/><rect x="1" y="8" width="17" height="17" rx="1.500" fill="#185abd"/><text x="9.500" y="21.500" text-anchor="middle" font-family="Liberation Sans,sans-serif" font-weight="bold" font-size="12.500" fill="#fff">W</text></svg>
<!-- scan -->
<svg style="left:1002px;top:10px" width="30" height="30" viewBox="0 0 30 30"><rect width="30" height="30" fill="#2b74e6"/><path d="M6 18.500h18v4.500H6z" fill="#fff"/><path d="M7 17.500L21.500 9.500l.8 1.500L9 18z" fill="#fff"/><path d="M8.500 21h3" stroke="#2b74e6" stroke-width="1"/></svg>
<!-- newline (active) -->
<div class="abs" style="left:1050px;top:0;width:61px;height:50px;background:#e4eff3"></div>
<svg style="left:1065px;top:10px" width="30" height="30" viewBox="0 0 30 30"><rect width="30" height="30" fill="#35a3dc"/><g fill="none" stroke="#fff" stroke-width="1.200" stroke-linecap="round"><path d="M10 5v2.500M5 8.500l1.800 1.300M15 8.500l-1.800 1.300"/><path d="M8 21c-3-2-3-8 2.500-9 3.200-.3 5 1.700 5.200 4"/><path d="M8.500 23.500l.5 2.500h3.500"/><path d="M22 11.500l2.500 2.500-10 10.500-3.600 1.200 1.200-3.600z"/></g></svg>
<!-- acrobat -->
<svg style="left:1127px;top:10px" width="30" height="30" viewBox="0 0 30 30"><rect width="30" height="30" rx="4" fill="#b30b00"/><path d="M6 22.500c1-2.500 5-4.500 9-5.500 4-1 8-.8 9 .5 1 1.500-1.500 2-4 1-4-1.800-7-7-6.500-10.500.3-2 2-2 2.300 0 .5 3-1.500 9-4.500 13-1.500 2-4.500 3.500-5.300 1.500z" fill="none" stroke="#fff" stroke-width="1.500"/></svg>
<!-- running indicators -->
<div class="abs" style="left:621px;top:47px;width:51px;height:3px;background:#2fb4c4"></div>
<div class="abs" style="left:683px;top:47px;width:51px;height:3px;background:#2fb4c4"></div><div class="abs" style="left:725px;top:47px;width:9px;height:3px;background:#7fcbd6"></div>
<div class="abs" style="left:745px;top:47px;width:51px;height:3px;background:#2fb4c4"></div><div class="abs" style="left:787px;top:47px;width:9px;height:3px;background:#7fcbd6"></div>
<div class="abs" style="left:869px;top:47px;width:51px;height:3px;background:#2fb4c4"></div>
<div class="abs" style="left:1050px;top:47px;width:61px;height:3px;background:#2fb4c4"></div>
<div class="abs" style="left:1117px;top:47px;width:51px;height:3px;background:#2fb4c4"></div><div class="abs" style="left:1159px;top:47px;width:9px;height:3px;background:#7fcbd6"></div>
<!-- tray -->
<svg style="left:1564px;top:20px" width="18" height="10" viewBox="0 0 18 10"><path d="M1 9l8-7.500L17 9" fill="none" stroke="#111" stroke-width="1.500"/></svg>
<svg style="left:1595px;top:13px" width="18" height="22" viewBox="0 0 18 22" fill="none" stroke="#111" stroke-width="1.200"><rect x="1" y="6.500" width="10" height="9" rx="1.500"/><path d="M11 10l4.500-2.500v7L11 12"/><path d="M3 3c2-2 5-2 7 0M3 19c2 2 5 2 7 0"/></svg>
<svg style="left:1622px;top:17px" width="22" height="14" viewBox="0 0 22 14"><path d="M5 13.500a4.200 4.200 0 0 1-.5-8.400A6 6 0 0 1 15.500 4a4.800 4.800 0 0 1 1.500 9.500z" fill="url(#cg)" stroke="#222" stroke-width="1"/><defs><linearGradient id="cg" x1="0" y1="0" x2="0" y2="1"><stop offset="0" stop-color="#ececec"/><stop offset="1" stop-color="#8c8c8c"/></linearGradient></defs></svg>
<svg style="left:1653px;top:14px" width="24" height="22" viewBox="0 0 24 22"><path d="M1 3.500L20 .8v16.500L1 18.500z" fill="none" stroke="#111" stroke-width="1.200"/><path d="M7 9a4 4 0 0 1 7-2M14 12a4 4 0 0 1-7 1.500M14 5v2.500h-2.500M7 15.500V13h2.500" fill="none" stroke="#111" stroke-width="1.100"/><circle cx="16" cy="17" r="4" fill="#2f6fc4"/></svg>
<svg style="left:1683px;top:19px" width="22" height="12" viewBox="0 0 22 12"><rect x=".6" y=".6" width="18" height="10.800" fill="none" stroke="#111" stroke-width="1.200"/><rect x="19" y="3.500" width="2" height="5" fill="#111"/><rect x="2.500" y="2.500" width="5" height="7" fill="#111"/></svg>
<svg style="left:1715px;top:16px" width="18" height="18" viewBox="0 0 18 18" fill="none" stroke="#111" stroke-width="1.200"><path d="M1 17C1 8 8 1.500 17 1.500M5.500 17c0-6 5-11 11.500-11M10 17c0-3.500 3-6.500 7-6.500"/><circle cx="14.500" cy="15.500" r="1.300" fill="#111" stroke="none"/></svg>
<svg style="left:1743px;top:16px" width="20" height="18" viewBox="0 0 20 18" fill="none" stroke="#111" stroke-width="1.200"><path d="M1 6.500h3.500L8.500 2v14l-4-4.500H1z"/><path d="M12 6l6 6M18 6l-6 6"/></svg>
<div class="abs" style="left:1760px;top:4px;width:100px;text-align:center;font-size:13.500px;line-height:20px;color:#111">18:25</div>
<div class="abs" style="left:1760px;top:27px;width:100px;text-align:center;font-size:14px;line-height:20px;color:#111">26.10.2022</div>
<svg style="left:1869px;top:15px" width="20" height="18" viewBox="0 0 20 18"><path d="M0 0h20v16H0z" fill="#000"/><path d="M4 4h12M4 8h12M4 12h8" stroke="#c9e0e6" stroke-width="1.300"/></svg>
<div class="abs" style="left:1876px;top:23px;width:24px;height:21px;border-radius:50%;background:#d6d8da;border:1px solid #8d9194;font-size:15px;line-height:20px;text-align:center;color:#111">38</div>
<div class="abs" style="left:1914px;top:0;width:1px;height:50px;background:#9fb2b8"></div>

</div>
</body>
</html>
